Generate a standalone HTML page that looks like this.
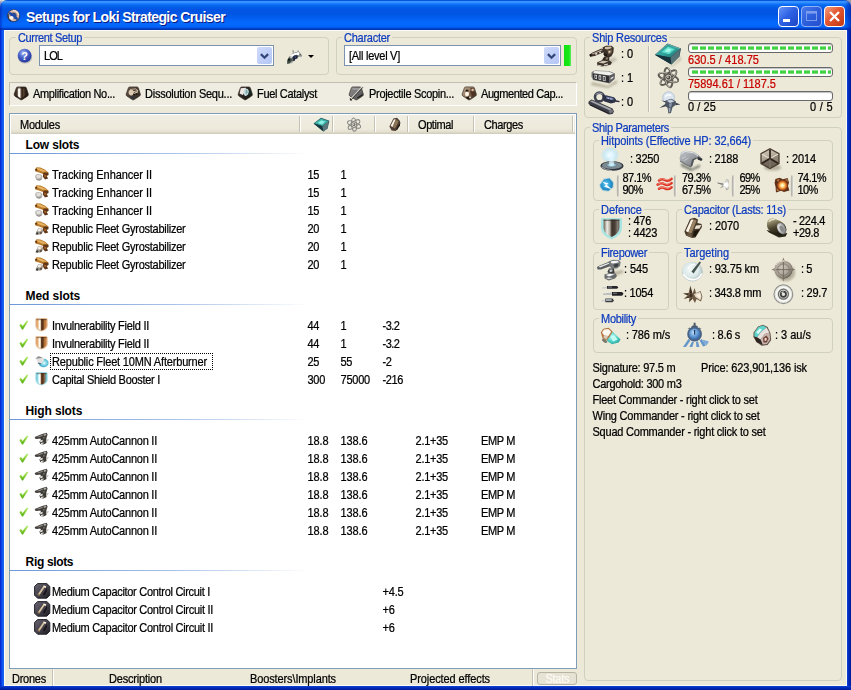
<!DOCTYPE html>
<html><head><meta charset="utf-8"><title>Setups for Loki Strategic Cruiser</title>
<style>

html,body{margin:0;padding:0}
html{background:#8E7866}
body{width:851px;height:690px;position:relative;overflow:hidden;background:#ECE9D8;font:11px/13px "Liberation Sans",sans-serif;color:#000}
.t{position:absolute;white-space:nowrap}
.tt{text-shadow:1px 1px 0 #0A1883}
.s{transform-origin:0 10px;transform:scaleY(1.1);-webkit-text-stroke:.22px}
.a{position:absolute}
.gb{position:absolute;border:1px solid #D0D0BF;border-radius:4px;box-sizing:border-box}
.cb{position:absolute;box-sizing:border-box;border:1px solid #7B93AE;background:#fff}
.ar{position:absolute;width:15px;height:17px;border-radius:2px;background:linear-gradient(135deg,#CFDBFB 0%,#C1D0F8 50%,#B4C6F6 100%)}
.pb{position:absolute;box-sizing:border-box;height:10px;border:1px solid #686868;border-radius:3px;background:#fff;box-shadow:inset 0 1px 1px #BEBEBE}
.pf{position:absolute;left:3px;top:1.5px;height:4.5px;background:repeating-linear-gradient(90deg,#3CD23C 0,#3CD23C 6px,#fff 6px,#fff 8px)}
.pf:after{content:"";position:absolute;left:0;right:0;top:0;height:100%;background:linear-gradient(180deg,rgba(255,255,255,.55),rgba(255,255,255,0) 40%,rgba(255,255,255,0) 60%,rgba(255,255,255,.45))}
.hs{position:absolute;top:116px;width:1px;height:16px;background:#C5C2B2;box-shadow:1px 0 0 #fff}
.gl{position:absolute;height:1px;left:10px;width:300px;background:linear-gradient(90deg,#6C96D8 0,#A9C2E8 55%,#fff 100%)}
.vb{position:absolute;width:4px;height:22px;border-radius:50%;background:linear-gradient(90deg,rgba(236,233,216,0),#CFCDC4 30%,#8C8C88 50%,#FBFAF4 72%,rgba(236,233,216,0))}
svg{position:absolute;overflow:visible}

</style></head><body>
<div class="a" style="left:843px;top:0px;width:8px;height:8px;background:#989CB0"></div>
<div class="a" style="left:0;top:0;width:851px;height:30px;background:linear-gradient(180deg,#0050D4 0,#0A5CE0 1px,#3A92FF 1.5px,#3590FF 2.5px,#1C7EFC 3.5px,#0A6AF2 5px,#045EE8 7px,#0256E3 9px,#0255E3 14px,#025CEC 17px,#0364F6 20px,#0468FD 23px,#0467FC 26px,#035AEC 27.5px,#0142CA 28.5px,#0038B4 29.5px,#0038B4 30px);border-radius:7px 7px 0 0"></div>
<div class="a" style="left:845px;top:0px;width:6px;height:30px;background:linear-gradient(90deg,rgba(0,20,150,0),rgba(0,20,150,.6));border-radius:0 7px 0 0"></div>
<div class="a" style="left:0px;top:0px;width:3px;height:30px;background:linear-gradient(90deg,rgba(0,20,170,.5),rgba(0,20,170,0));border-radius:7px 0 0 0"></div>
<div class="a" style="left:0px;top:30px;width:4px;height:660px;background:linear-gradient(90deg,#0020CC 0,#0834DC 1px,#0C50EC 2px,#1460F0 3px,#1460F0 4px)"></div>
<div class="a" style="left:847px;top:30px;width:4px;height:660px;background:linear-gradient(90deg,#1444D4 0,#0834C4 1px,#0028B4 2px,#001CA0 4px)"></div>
<div class="a" style="left:0px;top:686px;width:851px;height:4px;background:linear-gradient(180deg,#1444D4 0,#0834C4 1px,#0028B4 2px,#001CA0 4px)"></div>
<svg style="left:6.6px;top:8.6px" width="14" height="14" viewBox="0 0 14 14"><defs><radialGradient id="g1" cx="0.5" cy="0.5" r="0.5"><stop offset="0" stop-color="#2A56B8"/><stop offset="0.38" stop-color="#2A4890"/><stop offset="0.55" stop-color="#B89888"/><stop offset="0.8" stop-color="#E8CCBC"/><stop offset="1" stop-color="#5A5058"/></radialGradient><filter id="f2" x="-30%" y="-30%" width="160%" height="160%"><feGaussianBlur stdDeviation="0.5"/></filter></defs>
<circle cx="6.6" cy="6.8" r="6.5" fill="#20264A" opacity=".55"/>
<circle cx="6.6" cy="6.6" r="6" fill="url(#g1)"/>
<path d="M1.2 5.2 Q1 9.5 4 11.6" stroke="#2A2A30" stroke-width="1.5" fill="none" opacity=".8"/>
<path d="M3.2 4.4 L9.6 9.6" stroke="#1E48A8" stroke-width="2.6" stroke-linecap="round"/>
<ellipse cx="4.4" cy="8.8" rx="2.2" ry="1.9" fill="#FFF4EC" filter="url(#f2)"/>
<path d="M6 1.6 Q10.6 1.6 11.6 6" stroke="#F4E0D4" stroke-width="1.5" fill="none" opacity=".9"/></svg>
<span class="t tt" style="left:26.00px;top:9px;letter-spacing:-0.594px;color:#fff;font-size:14px;line-height:16px;font-weight:bold">Setups for Loki Strategic Cruiser</span>
<div class="a" style="left:4px;top:30px;width:843px;height:1px;background:#fff;opacity:.8"></div>
<div class="a" style="left:4px;top:30px;width:1px;height:656px;background:#fff;opacity:.8"></div>
<div class="a" style="left:846px;top:30px;width:1px;height:656px;background:#fff;opacity:.8"></div>
<div class="a" style="left:4px;top:685px;width:843px;height:1px;background:#fff;opacity:.8"></div>
<svg style="left:778px;top:6px" width="21" height="21" viewBox="0 0 21 21"><defs><linearGradient id="g3" x1="0" y1="0" x2="1" y2="1"><stop offset="0" stop-color="#6A98FA"/><stop offset="0.45" stop-color="#2E62E4"/><stop offset="1" stop-color="#1C44C4"/></linearGradient></defs>
<rect x=".5" y=".5" width="20" height="20" rx="3.5" fill="url(#g3)" stroke="#fff" stroke-opacity="1" stroke-width="1"/><rect x="5" y="13" width="7" height="3" fill="#fff"/></svg>
<svg style="left:801px;top:6px" width="21" height="21" viewBox="0 0 21 21"><defs><linearGradient id="g4" x1="0" y1="0" x2="1" y2="1"><stop offset="0" stop-color="#4C7CEC"/><stop offset="0.5" stop-color="#2C5EDC"/><stop offset="1" stop-color="#244ECC"/></linearGradient></defs>
<rect x=".5" y=".5" width="20" height="20" rx="3.5" fill="url(#g4)" stroke="#fff" stroke-opacity="0.5" stroke-width="1"/><rect x="5.5" y="6.5" width="10" height="8" fill="none" stroke="#7C9CEE" stroke-width="1"/><rect x="5" y="5" width="11" height="2.6" fill="#7C9CEE"/></svg>
<svg style="left:824px;top:6px" width="21" height="21" viewBox="0 0 21 21"><defs><linearGradient id="g5" x1="0" y1="0" x2="1" y2="1"><stop offset="0" stop-color="#F2A484"/><stop offset="0.45" stop-color="#E4552F"/><stop offset="1" stop-color="#BE3712"/></linearGradient></defs>
<rect x=".5" y=".5" width="20" height="20" rx="3.5" fill="url(#g5)" stroke="#fff" stroke-opacity="1" stroke-width="1"/><path d="M6 6 L15 15 M15 6 L6 15" stroke="#fff" stroke-width="2.3"/></svg>
<div class="gb" style="left:9px;top:37px;width:320px;height:38px"></div>
<div class="a" style="left:16px;top:37px;width:68px;height:1px;background:#ECE9D8"></div>
<span class="t s" style="left:18.00px;top:32px;letter-spacing:-0.345px;color:#0E3CBE">Current Setup</span>
<svg style="left:17px;top:47.6px" width="16" height="16" viewBox="0 0 16 16"><defs><radialGradient id="g6" cx="0.4" cy="0.3" r="0.75"><stop offset="0" stop-color="#A8B8F0"/><stop offset="0.45" stop-color="#4A64CC"/><stop offset="1" stop-color="#1E2E94"/></radialGradient></defs>
<ellipse cx="8" cy="9" rx="7.2" ry="6.6" fill="#7880A0" opacity=".45"/><circle cx="7.6" cy="7.7" r="6.9" fill="url(#g6)"/>
<text x="7.7" y="11.8" font-family="Liberation Sans,sans-serif" font-weight="bold" font-size="11" fill="#fff" text-anchor="middle">?</text></svg>
<div class="cb" style="left:39px;top:45px;width:235px;height:21px"></div>
<div class="ar" style="left:257px;top:47px"></div>
<svg style="left:260px;top:52.6px" width="9" height="7" viewBox="0 0 9 7"><path d="M.9 1.1 L4.5 4.7 L8.1 1.1" stroke="#34487A" stroke-width="2.3" fill="none"/></svg>
<span class="t s" style="left:44.00px;top:50px;letter-spacing:-0.900px">LOL</span>
<svg style="left:286px;top:48px" width="17" height="17" viewBox="0 0 17 17"><defs><filter id="f7" x="-30%" y="-30%" width="160%" height="160%"><feGaussianBlur stdDeviation="0.4"/></filter></defs><g filter="url(#f7)">
<path d="M1 16 L1.6 11.4 L3.4 8.4 L5.4 7.4 L6.4 5.6 L9 4.6 L12.4 3.6 L14 5 L16 7.4 L15.6 8.8 L12.6 8.4 L11.4 10.4 L9.4 11 L8.6 13 L6 13.4 L4 15.4 Z" fill="#5E6662"/>
<path d="M6.4 2.6 L7.6 2 L8 4.6 L6.8 5Z M11.6 2.4 L12.8 2.6 L12.6 4.4 L11.6 4.2Z" fill="#8A9092"/>
<path d="M4.6 7.8 L6.6 5.8 L9 5 L12.6 4 L13.6 5.4 L13 7.4 L10.4 6.8 L8 7.6 L6 9.4Z" fill="#FFFFFF"/>
<path d="M6.4 9.2 L8 7.8 L10.4 7.2 L11.6 8.6 L11 10.4 L9.2 11 L8.4 12.8 L7 12.4 L7.2 10.6Z" fill="#1E2440"/>
<path d="M8.6 8.6 L10.2 8.2 L10.2 9.6 L8.8 10Z" fill="#4A5478"/>
<path d="M1.4 12.4 L3 9.6 L5 10.8 L5.6 12.6 L4 14.6 L1.6 15.6 Z" fill="#3A4640"/>
<circle cx="2.9" cy="11.8" r="1.1" fill="#141A16"/>
<path d="M3.6 9 L5.2 7.8 L6.2 9.2 L5 10.4Z" fill="#D4DAD8"/>
<path d="M13 7.6 L16 7.6 L15.6 8.8 L13 8.6Z" fill="#B8BEC0"/>
<path d="M4.6 14.4 L6.4 13 L7.4 13.6 L5.4 15.4Z" fill="#9AA29E"/></g></svg>
<div class="a" style="left:308px;top:55px;width:0;height:0;border-left:3px solid transparent;border-right:3px solid transparent;border-top:3px solid #000"></div>
<div class="gb" style="left:336px;top:37px;width:241px;height:38px"></div>
<div class="a" style="left:342px;top:37px;width:50px;height:1px;background:#ECE9D8"></div>
<span class="t s" style="left:344.00px;top:32px;letter-spacing:-0.255px;color:#0E3CBE">Character</span>
<div class="cb" style="left:344px;top:45px;width:217px;height:21px"></div>
<div class="ar" style="left:544px;top:47px"></div>
<svg style="left:547px;top:52.6px" width="9" height="7" viewBox="0 0 9 7"><path d="M.9 1.1 L4.5 4.7 L8.1 1.1" stroke="#34487A" stroke-width="2.3" fill="none"/></svg>
<span class="t s" style="left:349.00px;top:50px;letter-spacing:-0.263px">[All level V]</span>
<div class="a" style="left:564px;top:45px;width:7px;height:21px;background:linear-gradient(90deg,#10E210,#16E616 70%,#5CEE5C)"></div>
<div class="a" style="left:9px;top:82px;width:568px;height:24px;border:1px solid #C2BFAE;border-bottom-color:#fff;border-right-color:#fff;box-sizing:border-box;background:#EFEDE1"></div>
<svg style="left:14px;top:86px" width="15" height="15" viewBox="0 0 15 15"><defs><linearGradient id="g8" x1="0" y1="0" x2="1" y2="0"><stop offset="0" stop-color="#2E221A"/><stop offset="0.22" stop-color="#4A3A2E"/><stop offset="0.3" stop-color="#F4EEE4"/><stop offset="0.4" stop-color="#FFFFFF"/><stop offset="0.47" stop-color="#8A7460"/><stop offset="0.55" stop-color="#2A1E16"/><stop offset="0.68" stop-color="#5A4434"/><stop offset="0.78" stop-color="#2E2018"/><stop offset="1" stop-color="#241A12"/></linearGradient><filter id="f9" x="-30%" y="-30%" width="160%" height="160%"><feGaussianBlur stdDeviation="0.35"/></filter></defs><g filter="url(#f9)"><path d="M3.8 .9 L10.9 .9 Q12 .9 12.4 2 L14.3 8 Q14.6 9.2 13.7 10 L8.2 13.6 Q7.2 14.2 6.2 13.6 L.8 10 Q-.1 9.2 .2 8 L2.3 2 Q2.7 .9 3.8 .9Z" fill="url(#g8)" stroke="#2A201A" stroke-width=".6"/><path d="M3.8 .9 L10.9 .9 L12 2.4 L2.6 2.4Z" fill="#2A1E16" opacity=".7"/><path d="M1 10 L6.2 13.6 L8.2 13.6 L13.6 10 L12 9.6 L7.2 12.6 L2.6 9.6Z" fill="#1A120C" opacity=".8"/></g></svg>
<span class="t s" style="left:33.00px;top:88px;letter-spacing:-0.350px">Amplification No...</span>
<svg style="left:126px;top:86px" width="15" height="15" viewBox="0 0 15 15"><defs><linearGradient id="g10" x1="0" y1="0" x2="1" y2="1"><stop offset="0" stop-color="#6A5A4C"/><stop offset="0.5" stop-color="#4A3C30"/><stop offset="1" stop-color="#2A2620"/></linearGradient><filter id="f11" x="-30%" y="-30%" width="160%" height="160%"><feGaussianBlur stdDeviation="0.35"/></filter></defs><g filter="url(#f11)"><path d="M3.8 .9 L10.9 .9 Q12 .9 12.4 2 L14.3 8 Q14.6 9.2 13.7 10 L8.2 13.6 Q7.2 14.2 6.2 13.6 L.8 10 Q-.1 9.2 .2 8 L2.3 2 Q2.7 .9 3.8 .9Z" fill="url(#g10)" stroke="#2A201A" stroke-width=".6"/><ellipse cx="5.2" cy="6.6" rx="2.6" ry="2.8" fill="#DCCCB4"/><path d="M4 3.6 L10 2.8 L12 5 L7 8.6" stroke="#B8A890" stroke-width="1" fill="none"/><path d="M7 6 L11.6 4.4 M7.6 7.6 L12 6" stroke="#E8DCC8" stroke-width=".8"/><circle cx="8" cy="8.4" r=".9" fill="#120C08"/><circle cx="10.2" cy="8" r=".8" fill="#120C08"/><path d="M3.4 10.6 L7.2 13.2 L10 11.2 L6.6 10Z" fill="#30343E"/></g></svg>
<span class="t s" style="left:145.00px;top:88px;letter-spacing:-0.248px">Dissolution Sequ...</span>
<svg style="left:238px;top:86px" width="15" height="15" viewBox="0 0 15 15"><defs><linearGradient id="g12" x1="0" y1="0" x2="1" y2="1"><stop offset="0" stop-color="#4A3E38"/><stop offset="0.5" stop-color="#2A2420"/><stop offset="1" stop-color="#161412"/></linearGradient><filter id="f13" x="-30%" y="-30%" width="160%" height="160%"><feGaussianBlur stdDeviation="0.35"/></filter></defs><g filter="url(#f13)"><path d="M3.8 .9 L10.9 .9 Q12 .9 12.4 2 L14.3 8 Q14.6 9.2 13.7 10 L8.2 13.6 Q7.2 14.2 6.2 13.6 L.8 10 Q-.1 9.2 .2 8 L2.3 2 Q2.7 .9 3.8 .9Z" fill="url(#g12)" stroke="#2A201A" stroke-width=".6"/><path d="M2.8 2.2 L8 1.8 L7 6 L4.6 9 L1.6 7.4Z" fill="#F0E8E4"/><path d="M6.6 2.6 Q10.4 2 10.8 5.6 Q10.6 9.4 7.6 10 Q5.2 9.4 5.6 5.6Z" fill="#C4DCDC"/><path d="M8 3.6 Q9.8 4 9.6 6.4 L8 8.4 Q7 6 8 3.6Z" fill="#7CA4A6"/><path d="M10.8 3 L12.6 5 L13.2 8.6 L10.6 9.6 Q11.6 6 10.8 3Z" fill="#14302E"/></g></svg>
<span class="t s" style="left:257.00px;top:88px;letter-spacing:-0.323px">Fuel Catalyst</span>
<svg style="left:349px;top:86px" width="15" height="15" viewBox="0 0 15 15"><defs><linearGradient id="g14" x1="0" y1="0" x2="1" y2="1"><stop offset="0" stop-color="#8E8E8C"/><stop offset="0.5" stop-color="#727274"/><stop offset="1" stop-color="#3A3A38"/></linearGradient><filter id="f15" x="-30%" y="-30%" width="160%" height="160%"><feGaussianBlur stdDeviation="0.35"/></filter></defs><g filter="url(#f15)"><path d="M3.8 .9 L10.9 .9 Q12 .9 12.4 2 L14.3 8 Q14.6 9.2 13.7 10 L8.2 13.6 Q7.2 14.2 6.2 13.6 L.8 10 Q-.1 9.2 .2 8 L2.3 2 Q2.7 .9 3.8 .9Z" fill="url(#g14)" stroke="#2A201A" stroke-width=".6"/><path d="M3.4 2.6 L10.6 2.4 L11 3.4 L4 3.6Z" fill="#B4B4B2"/><path d="M1.2 13.4 L13.4 .4" stroke="#D8D4CC" stroke-width="1.1"/><path d="M2 14 L14 1.2" stroke="#2E2A26" stroke-width=".9"/><path d="M.8 11.6 L3.4 14.4 L1 14.6Z" fill="#2A2622"/><path d="M8.6 12.6 L13.4 9.4 L13.8 8 L8.2 11.6Z" fill="#1E1C1A"/></g></svg>
<span class="t s" style="left:369.00px;top:88px;letter-spacing:-0.305px">Projectile Scopin...</span>
<svg style="left:462px;top:86px" width="15" height="15" viewBox="0 0 15 15"><defs><linearGradient id="g16" x1="0" y1="0" x2="1" y2="0.8"><stop offset="0" stop-color="#B8A48C"/><stop offset="0.45" stop-color="#9A8068"/><stop offset="1" stop-color="#3A2418"/></linearGradient><filter id="f17" x="-30%" y="-30%" width="160%" height="160%"><feGaussianBlur stdDeviation="0.35"/></filter></defs><g filter="url(#f17)"><path d="M3.8 .9 L10.9 .9 Q12 .9 12.4 2 L14.3 8 Q14.6 9.2 13.7 10 L8.2 13.6 Q7.2 14.2 6.2 13.6 L.8 10 Q-.1 9.2 .2 8 L2.3 2 Q2.7 .9 3.8 .9Z" fill="url(#g16)" stroke="#2A201A" stroke-width=".6"/><circle cx="5" cy="5" r="1.5" fill="#1E1408"/><ellipse cx="5" cy="8" rx="2" ry="2.4" fill="#FFF4E4"/><path d="M8.6 2 L11.6 2.4 L13.4 8 L10.6 10.4 L8.4 7Z" fill="#4A2C1E" opacity=".85"/><circle cx="10.6" cy="4" r="1.3" fill="#D8C0A0"/><path d="M3.6 11.6 L6.4 13.4 L9 12 L7 10.6Z" fill="#1A140E"/><circle cx="8" cy="11.4" r=".9" fill="#F4ECE0"/></g></svg>
<span class="t s" style="left:481.00px;top:88px;letter-spacing:-0.417px">Augmented Cap...</span>
<div class="a" style="left:9px;top:113px;width:568px;height:556px;box-sizing:border-box;border:1px solid #7F9DB9;background:#fff"></div>
<div class="a" style="left:11px;top:115px;width:564px;height:19px;background:linear-gradient(180deg,#F0EEE2 0,#EDEADB 14px,#E2DFCF 17px,#D6D2C2 18px,#CBC7B8 20px)"></div>
<div class="hs" style="left:299px"></div>
<div class="hs" style="left:332px"></div>
<div class="hs" style="left:374px"></div>
<div class="hs" style="left:407px"></div>
<div class="hs" style="left:473px"></div>
<div class="hs" style="left:572px"></div>
<span class="t s" style="left:20.00px;top:119px;letter-spacing:-0.225px">Modules</span>
<span class="t s" style="left:418.00px;top:119px;letter-spacing:-0.415px">Optimal</span>
<span class="t s" style="left:484.00px;top:119px;letter-spacing:-0.368px">Charges</span>
<svg style="left:313px;top:117px" width="17" height="15" viewBox="0 0 17 15"><defs><filter id="f18" x="-30%" y="-30%" width="160%" height="160%"><feGaussianBlur stdDeviation="0.3"/></filter></defs><g filter="url(#f18)"><path d="M.6 6.4 L8 .8 L16.4 3.8 L14.6 11.4 L10.4 14.4 Z" fill="#245258"/><path d="M1.4 6.2 L8 1.4 L15.6 4.2 L9.4 9Z" fill="#3CB4AC"/><path d="M4.8 5.8 L8.4 3.2 L12.2 4.8 L8.8 7.4Z" fill="#8CF0E0"/><path d="M.6 6.4 L9.4 9 L10.4 14.4 Z" fill="#17383E"/><path d="M9.4 9 L15.6 4.2 L14.6 11.4 L10.4 14.4Z" fill="#5A787C"/></g></svg>
<svg style="left:346px;top:117px" width="16" height="15" viewBox="0 0 16 15"><g fill="none" stroke="#8C8A86" stroke-width="1.1"><ellipse cx="8" cy="7.6" rx="7" ry="2.6" transform="rotate(22 8 7.6)"/><ellipse cx="8" cy="7.6" rx="7" ry="2.6" transform="rotate(-38 8 7.6)"/><ellipse cx="8" cy="7.6" rx="6.6" ry="2.5" transform="rotate(84 8 7.6)"/></g><circle cx="8" cy="7.6" r="1.5" fill="#6A6864"/><circle cx="7.6" cy="7.2" r=".7" fill="#D8D6D0"/></svg>
<svg style="left:388px;top:117px" width="13" height="15" viewBox="0 0 13 15"><defs><filter id="f19" x="-30%" y="-30%" width="160%" height="160%"><feGaussianBlur stdDeviation="0.3"/></filter></defs><g filter="url(#f19)"><path d="M1.4 9.4 L5.4 1.6 L9 .8 L12 4 L12.4 6.6 L7.6 14 L3.6 13.4 Z" fill="#4E3E30"/><path d="M2.6 9 L5.8 2.4 L7.8 2.2 L4.6 10Z" fill="#FAF2E4"/><path d="M7.8 2.2 L10.6 4.6 L7 11.6 L4.8 10.2Z" fill="#8A7458"/><path d="M8 12.6 L11.8 6 L12 8.4 L8.8 13.6Z" fill="#1E1610"/></g></svg>
<span class="t" style="left:25.60px;top:138px;letter-spacing:-0.194px;font-size:12px;line-height:14px;font-weight:bold">Low slots</span>
<div class="gl" style="top:153px"></div>
<svg style="left:34px;top:166px" width="16" height="16" viewBox="0 0 16 16"><defs><filter id="f21" x="-30%" y="-30%" width="160%" height="160%"><feGaussianBlur stdDeviation="0.35"/></filter></defs><g filter="url(#f21)"><path d="M.8 3.4 L2.6 1.2 L6.4 1.6 L10.8 3.6 L14.4 6.6 L14 8.6 L9.6 8.2 L5 6.6 L1.4 5.6Z" fill="#B87A2C"/>
<path d="M2.4 2 L6.4 2.4 L10.4 4.2 L12.6 6 L8 5.4 L3.6 3.8Z" fill="#E8B464"/>
<path d="M1.2 3.6 L2.6 2.4 L3.4 4 L2 5Z" fill="#5A3210"/>
<path d="M9.8 6.4 L14.4 6.8 L14.6 9 L12.6 10 L14.2 12.4 L11 13.4 L8.8 10.6 L9.2 8Z" fill="#5E3414"/>
<path d="M10.4 8.6 L12.4 9.2 L11.8 11 L10 10.4Z" fill="#A8642C"/><path d="M1.2 10.6 Q1.2 8.2 4 8 L7 8.4 Q8.6 9.2 8.4 11.6 Q8 14.6 5 14.8 Q1.6 14.6 1.2 10.6Z" fill="#B8B4B0"/>
<path d="M2.2 10.2 Q2.6 8.8 4.4 8.8 L6.4 9.2 Q7.2 10 6.6 11.6 Q5 12.6 3.2 12Z" fill="#E4E0DC"/>
<path d="M2.6 13.4 Q5 15 7.6 13" stroke="#8A8A88" stroke-width=".9" fill="none"/></g></svg>
<span class="t s" style="left:52.00px;top:169px;letter-spacing:-0.055px">Tracking Enhancer II</span>
<span class="t s" style="left:307.50px;top:169px;letter-spacing:-0.375px">15</span>
<span class="t s" style="left:340.50px;top:169px">1</span>
<svg style="left:34px;top:184px" width="16" height="16" viewBox="0 0 16 16"><defs><filter id="f23" x="-30%" y="-30%" width="160%" height="160%"><feGaussianBlur stdDeviation="0.35"/></filter></defs><g filter="url(#f23)"><path d="M.8 3.4 L2.6 1.2 L6.4 1.6 L10.8 3.6 L14.4 6.6 L14 8.6 L9.6 8.2 L5 6.6 L1.4 5.6Z" fill="#B87A2C"/>
<path d="M2.4 2 L6.4 2.4 L10.4 4.2 L12.6 6 L8 5.4 L3.6 3.8Z" fill="#E8B464"/>
<path d="M1.2 3.6 L2.6 2.4 L3.4 4 L2 5Z" fill="#5A3210"/>
<path d="M9.8 6.4 L14.4 6.8 L14.6 9 L12.6 10 L14.2 12.4 L11 13.4 L8.8 10.6 L9.2 8Z" fill="#5E3414"/>
<path d="M10.4 8.6 L12.4 9.2 L11.8 11 L10 10.4Z" fill="#A8642C"/><path d="M1.2 10.6 Q1.2 8.2 4 8 L7 8.4 Q8.6 9.2 8.4 11.6 Q8 14.6 5 14.8 Q1.6 14.6 1.2 10.6Z" fill="#B8B4B0"/>
<path d="M2.2 10.2 Q2.6 8.8 4.4 8.8 L6.4 9.2 Q7.2 10 6.6 11.6 Q5 12.6 3.2 12Z" fill="#E4E0DC"/>
<path d="M2.6 13.4 Q5 15 7.6 13" stroke="#8A8A88" stroke-width=".9" fill="none"/></g></svg>
<span class="t s" style="left:52.00px;top:187px;letter-spacing:-0.055px">Tracking Enhancer II</span>
<span class="t s" style="left:307.50px;top:187px;letter-spacing:-0.375px">15</span>
<span class="t s" style="left:340.50px;top:187px">1</span>
<svg style="left:34px;top:202px" width="16" height="16" viewBox="0 0 16 16"><defs><filter id="f25" x="-30%" y="-30%" width="160%" height="160%"><feGaussianBlur stdDeviation="0.35"/></filter></defs><g filter="url(#f25)"><path d="M.8 3.4 L2.6 1.2 L6.4 1.6 L10.8 3.6 L14.4 6.6 L14 8.6 L9.6 8.2 L5 6.6 L1.4 5.6Z" fill="#B87A2C"/>
<path d="M2.4 2 L6.4 2.4 L10.4 4.2 L12.6 6 L8 5.4 L3.6 3.8Z" fill="#E8B464"/>
<path d="M1.2 3.6 L2.6 2.4 L3.4 4 L2 5Z" fill="#5A3210"/>
<path d="M9.8 6.4 L14.4 6.8 L14.6 9 L12.6 10 L14.2 12.4 L11 13.4 L8.8 10.6 L9.2 8Z" fill="#5E3414"/>
<path d="M10.4 8.6 L12.4 9.2 L11.8 11 L10 10.4Z" fill="#A8642C"/><path d="M1.2 10.6 Q1.2 8.2 4 8 L7 8.4 Q8.6 9.2 8.4 11.6 Q8 14.6 5 14.8 Q1.6 14.6 1.2 10.6Z" fill="#B8B4B0"/>
<path d="M2.2 10.2 Q2.6 8.8 4.4 8.8 L6.4 9.2 Q7.2 10 6.6 11.6 Q5 12.6 3.2 12Z" fill="#E4E0DC"/>
<path d="M2.6 13.4 Q5 15 7.6 13" stroke="#8A8A88" stroke-width=".9" fill="none"/></g></svg>
<span class="t s" style="left:52.00px;top:205px;letter-spacing:-0.055px">Tracking Enhancer II</span>
<span class="t s" style="left:307.50px;top:205px;letter-spacing:-0.375px">15</span>
<span class="t s" style="left:340.50px;top:205px">1</span>
<svg style="left:34px;top:220px" width="16" height="16" viewBox="0 0 16 16"><defs><filter id="f27" x="-30%" y="-30%" width="160%" height="160%"><feGaussianBlur stdDeviation="0.35"/></filter></defs><g filter="url(#f27)"><path d="M.8 3.4 L2.6 1.2 L6.4 1.6 L10.8 3.6 L14.4 6.6 L14 8.6 L9.6 8.2 L5 6.6 L1.4 5.6Z" fill="#B87A2C"/>
<path d="M2.4 2 L6.4 2.4 L10.4 4.2 L12.6 6 L8 5.4 L3.6 3.8Z" fill="#E8B464"/>
<path d="M1.2 3.6 L2.6 2.4 L3.4 4 L2 5Z" fill="#5A3210"/>
<path d="M9.8 6.4 L14.4 6.8 L14.6 9 L12.6 10 L14.2 12.4 L11 13.4 L8.8 10.6 L9.2 8Z" fill="#5E3414"/>
<path d="M10.4 8.6 L12.4 9.2 L11.8 11 L10 10.4Z" fill="#A8642C"/><path d="M4.4 8 L8.4 8.4 L9.4 11 L8 13.6 L5.4 14.8 L1.6 14.2 L2.4 11.4Z" fill="#A8A49C"/>
<path d="M4.6 8.4 L7.6 8.8 L7.4 11 L5 11.6 L3.6 10.4Z" fill="#F4F0EC"/>
<path d="M1.6 14.2 L3 12 L4.6 13 L3.8 14.8Z" fill="#3A3E36"/>
<path d="M5.6 12 L8 11.4 L8 13.4 L6 14.4Z" fill="#6A5A48"/>
<path d="M6.4 9.4 L8 10 L7.6 11.4Z" fill="#C8906C"/></g></svg>
<span class="t s" style="left:52.00px;top:223px;letter-spacing:-0.246px">Republic Fleet Gyrostabilizer</span>
<span class="t s" style="left:307.50px;top:223px;letter-spacing:-0.375px">20</span>
<span class="t s" style="left:340.50px;top:223px">1</span>
<svg style="left:34px;top:238px" width="16" height="16" viewBox="0 0 16 16"><defs><filter id="f29" x="-30%" y="-30%" width="160%" height="160%"><feGaussianBlur stdDeviation="0.35"/></filter></defs><g filter="url(#f29)"><path d="M.8 3.4 L2.6 1.2 L6.4 1.6 L10.8 3.6 L14.4 6.6 L14 8.6 L9.6 8.2 L5 6.6 L1.4 5.6Z" fill="#B87A2C"/>
<path d="M2.4 2 L6.4 2.4 L10.4 4.2 L12.6 6 L8 5.4 L3.6 3.8Z" fill="#E8B464"/>
<path d="M1.2 3.6 L2.6 2.4 L3.4 4 L2 5Z" fill="#5A3210"/>
<path d="M9.8 6.4 L14.4 6.8 L14.6 9 L12.6 10 L14.2 12.4 L11 13.4 L8.8 10.6 L9.2 8Z" fill="#5E3414"/>
<path d="M10.4 8.6 L12.4 9.2 L11.8 11 L10 10.4Z" fill="#A8642C"/><path d="M4.4 8 L8.4 8.4 L9.4 11 L8 13.6 L5.4 14.8 L1.6 14.2 L2.4 11.4Z" fill="#A8A49C"/>
<path d="M4.6 8.4 L7.6 8.8 L7.4 11 L5 11.6 L3.6 10.4Z" fill="#F4F0EC"/>
<path d="M1.6 14.2 L3 12 L4.6 13 L3.8 14.8Z" fill="#3A3E36"/>
<path d="M5.6 12 L8 11.4 L8 13.4 L6 14.4Z" fill="#6A5A48"/>
<path d="M6.4 9.4 L8 10 L7.6 11.4Z" fill="#C8906C"/></g></svg>
<span class="t s" style="left:52.00px;top:241px;letter-spacing:-0.246px">Republic Fleet Gyrostabilizer</span>
<span class="t s" style="left:307.50px;top:241px;letter-spacing:-0.375px">20</span>
<span class="t s" style="left:340.50px;top:241px">1</span>
<svg style="left:34px;top:256px" width="16" height="16" viewBox="0 0 16 16"><defs><filter id="f31" x="-30%" y="-30%" width="160%" height="160%"><feGaussianBlur stdDeviation="0.35"/></filter></defs><g filter="url(#f31)"><path d="M.8 3.4 L2.6 1.2 L6.4 1.6 L10.8 3.6 L14.4 6.6 L14 8.6 L9.6 8.2 L5 6.6 L1.4 5.6Z" fill="#B87A2C"/>
<path d="M2.4 2 L6.4 2.4 L10.4 4.2 L12.6 6 L8 5.4 L3.6 3.8Z" fill="#E8B464"/>
<path d="M1.2 3.6 L2.6 2.4 L3.4 4 L2 5Z" fill="#5A3210"/>
<path d="M9.8 6.4 L14.4 6.8 L14.6 9 L12.6 10 L14.2 12.4 L11 13.4 L8.8 10.6 L9.2 8Z" fill="#5E3414"/>
<path d="M10.4 8.6 L12.4 9.2 L11.8 11 L10 10.4Z" fill="#A8642C"/><path d="M4.4 8 L8.4 8.4 L9.4 11 L8 13.6 L5.4 14.8 L1.6 14.2 L2.4 11.4Z" fill="#A8A49C"/>
<path d="M4.6 8.4 L7.6 8.8 L7.4 11 L5 11.6 L3.6 10.4Z" fill="#F4F0EC"/>
<path d="M1.6 14.2 L3 12 L4.6 13 L3.8 14.8Z" fill="#3A3E36"/>
<path d="M5.6 12 L8 11.4 L8 13.4 L6 14.4Z" fill="#6A5A48"/>
<path d="M6.4 9.4 L8 10 L7.6 11.4Z" fill="#C8906C"/></g></svg>
<span class="t s" style="left:52.00px;top:259px;letter-spacing:-0.246px">Republic Fleet Gyrostabilizer</span>
<span class="t s" style="left:307.50px;top:259px;letter-spacing:-0.375px">20</span>
<span class="t s" style="left:340.50px;top:259px">1</span>
<span class="t" style="left:25.60px;top:289px;letter-spacing:-0.083px;font-size:12px;line-height:14px;font-weight:bold">Med slots</span>
<div class="gl" style="top:304px"></div>
<svg style="left:18.6px;top:320.4px" width="10" height="10" viewBox="0 0 10 10"><defs><linearGradient id="g32" x1="0" y1="0" x2="0" y2="1"><stop offset="0" stop-color="#C4EE84"/><stop offset="0.45" stop-color="#8ED63E"/><stop offset="1" stop-color="#58AC18"/></linearGradient><filter id="f33" x="-30%" y="-30%" width="160%" height="160%"><feGaussianBlur stdDeviation="0.35"/></filter></defs><path d="M.4 5.2 L2 3.8 L3.6 6 L7.8 .4 L9.4 1.2 L4 9.4 L3 9.4 Z" fill="url(#g32)" filter="url(#f33)"/></svg>
<svg style="left:34px;top:317px" width="16" height="16" viewBox="0 0 16 16"><defs><linearGradient id="g34" x1="0" y1="0" x2="1" y2="0"><stop offset="0" stop-color="#D08844"/><stop offset="0.16" stop-color="#F4C490"/><stop offset="0.3" stop-color="#FFFFFF"/><stop offset="0.42" stop-color="#D8C0A0"/><stop offset="0.5" stop-color="#4A2C18"/><stop offset="0.66" stop-color="#6A3C1C"/><stop offset="0.8" stop-color="#B8763C"/><stop offset="1" stop-color="#D08844"/></linearGradient><filter id="f35" x="-30%" y="-30%" width="160%" height="160%"><feGaussianBlur stdDeviation="0.35"/></filter></defs><g filter="url(#f35)"><path d="M1.4 2.4 Q1.4 1 3 1 L11.4 1 Q13.4 1 13.6 2.4 L13.8 8.4 Q13.6 12.6 8.4 14.2 Q7.4 14.4 6.4 14.2 Q1.4 12.4 1.4 8.4Z" fill="#D08844" opacity=".55"/>
<path d="M2.6 2 L12.6 2 L12.6 8.4 Q12.4 12 7.6 13.6 Q2.8 12 2.6 8.4Z" fill="url(#g34)"/>
<path d="M2.6 2 L12.6 2 L12.6 3.2 L2.6 3.2Z" fill="#3A2416" opacity=".45"/></g></svg>
<span class="t s" style="left:52.00px;top:320px;letter-spacing:-0.264px">Invulnerability Field II</span>
<span class="t s" style="left:307.50px;top:320px;letter-spacing:-0.375px">44</span>
<span class="t s" style="left:340.50px;top:320px">1</span>
<span class="t s" style="left:382.50px;top:320px;letter-spacing:-0.492px">-3.2</span>
<svg style="left:18.6px;top:338.4px" width="10" height="10" viewBox="0 0 10 10"><defs><linearGradient id="g36" x1="0" y1="0" x2="0" y2="1"><stop offset="0" stop-color="#C4EE84"/><stop offset="0.45" stop-color="#8ED63E"/><stop offset="1" stop-color="#58AC18"/></linearGradient><filter id="f37" x="-30%" y="-30%" width="160%" height="160%"><feGaussianBlur stdDeviation="0.35"/></filter></defs><path d="M.4 5.2 L2 3.8 L3.6 6 L7.8 .4 L9.4 1.2 L4 9.4 L3 9.4 Z" fill="url(#g36)" filter="url(#f37)"/></svg>
<svg style="left:34px;top:335px" width="16" height="16" viewBox="0 0 16 16"><defs><linearGradient id="g38" x1="0" y1="0" x2="1" y2="0"><stop offset="0" stop-color="#D08844"/><stop offset="0.16" stop-color="#F4C490"/><stop offset="0.3" stop-color="#FFFFFF"/><stop offset="0.42" stop-color="#D8C0A0"/><stop offset="0.5" stop-color="#4A2C18"/><stop offset="0.66" stop-color="#6A3C1C"/><stop offset="0.8" stop-color="#B8763C"/><stop offset="1" stop-color="#D08844"/></linearGradient><filter id="f39" x="-30%" y="-30%" width="160%" height="160%"><feGaussianBlur stdDeviation="0.35"/></filter></defs><g filter="url(#f39)"><path d="M1.4 2.4 Q1.4 1 3 1 L11.4 1 Q13.4 1 13.6 2.4 L13.8 8.4 Q13.6 12.6 8.4 14.2 Q7.4 14.4 6.4 14.2 Q1.4 12.4 1.4 8.4Z" fill="#D08844" opacity=".55"/>
<path d="M2.6 2 L12.6 2 L12.6 8.4 Q12.4 12 7.6 13.6 Q2.8 12 2.6 8.4Z" fill="url(#g38)"/>
<path d="M2.6 2 L12.6 2 L12.6 3.2 L2.6 3.2Z" fill="#3A2416" opacity=".45"/></g></svg>
<span class="t s" style="left:52.00px;top:338px;letter-spacing:-0.264px">Invulnerability Field II</span>
<span class="t s" style="left:307.50px;top:338px;letter-spacing:-0.375px">44</span>
<span class="t s" style="left:340.50px;top:338px">1</span>
<span class="t s" style="left:382.50px;top:338px;letter-spacing:-0.492px">-3.2</span>
<svg style="left:18.6px;top:356.4px" width="10" height="10" viewBox="0 0 10 10"><defs><linearGradient id="g40" x1="0" y1="0" x2="0" y2="1"><stop offset="0" stop-color="#C4EE84"/><stop offset="0.45" stop-color="#8ED63E"/><stop offset="1" stop-color="#58AC18"/></linearGradient><filter id="f41" x="-30%" y="-30%" width="160%" height="160%"><feGaussianBlur stdDeviation="0.35"/></filter></defs><path d="M.4 5.2 L2 3.8 L3.6 6 L7.8 .4 L9.4 1.2 L4 9.4 L3 9.4 Z" fill="url(#g40)" filter="url(#f41)"/></svg>
<svg style="left:34px;top:353px" width="16" height="16" viewBox="0 0 16 16"><defs><filter id="f43" x="-30%" y="-30%" width="160%" height="160%"><feGaussianBlur stdDeviation="0.35"/></filter><radialGradient id="g42" cx="0.55" cy="0.5" r="0.6"><stop offset="0" stop-color="#E8FCFF"/><stop offset="0.45" stop-color="#7CD4E4"/><stop offset="1" stop-color="#2E9CBC"/></radialGradient></defs><g filter="url(#f43)">
<ellipse cx="9.6" cy="10" rx="5" ry="4.2" fill="url(#g42)"/>
<path d="M1.4 5.4 L4.4 3.2 L8.6 4.4 L10.4 7 L7.4 10.6 L4 9.4Z" fill="#E4E2E0"/>
<path d="M1.4 5.4 L4.4 3.2 L8.6 4.4 L6.4 5.2 L3.6 5.4Z" fill="#8A8C92"/>
<path d="M4 9.4 L7.4 10.6 L6.6 11.6 L3.8 10.4Z" fill="#5A6470"/></g></svg>
<span class="t s" style="left:52.00px;top:356px;letter-spacing:-0.167px">Republic Fleet 10MN Afterburner</span>
<span class="t s" style="left:307.50px;top:356px;letter-spacing:-0.375px">25</span>
<span class="t s" style="left:340.50px;top:356px;letter-spacing:-0.375px">55</span>
<span class="t s" style="left:382.50px;top:356px;letter-spacing:-0.391px">-2</span>
<svg style="left:18.6px;top:374.4px" width="10" height="10" viewBox="0 0 10 10"><defs><linearGradient id="g44" x1="0" y1="0" x2="0" y2="1"><stop offset="0" stop-color="#C4EE84"/><stop offset="0.45" stop-color="#8ED63E"/><stop offset="1" stop-color="#58AC18"/></linearGradient><filter id="f45" x="-30%" y="-30%" width="160%" height="160%"><feGaussianBlur stdDeviation="0.35"/></filter></defs><path d="M.4 5.2 L2 3.8 L3.6 6 L7.8 .4 L9.4 1.2 L4 9.4 L3 9.4 Z" fill="url(#g44)" filter="url(#f45)"/></svg>
<svg style="left:34px;top:371px" width="16" height="16" viewBox="0 0 16 16"><defs><linearGradient id="g46" x1="0" y1="0" x2="1" y2="0"><stop offset="0" stop-color="#58BCCC"/><stop offset="0.16" stop-color="#B4ECF4"/><stop offset="0.3" stop-color="#FFFFFF"/><stop offset="0.42" stop-color="#D8C0A0"/><stop offset="0.5" stop-color="#4A2C18"/><stop offset="0.66" stop-color="#6A3C1C"/><stop offset="0.8" stop-color="#8A6E58"/><stop offset="1" stop-color="#58BCCC"/></linearGradient><filter id="f47" x="-30%" y="-30%" width="160%" height="160%"><feGaussianBlur stdDeviation="0.35"/></filter></defs><g filter="url(#f47)"><path d="M1.4 2.4 Q1.4 1 3 1 L11.4 1 Q13.4 1 13.6 2.4 L13.8 8.4 Q13.6 12.6 8.4 14.2 Q7.4 14.4 6.4 14.2 Q1.4 12.4 1.4 8.4Z" fill="#58BCCC" opacity=".55"/>
<path d="M2.6 2 L12.6 2 L12.6 8.4 Q12.4 12 7.6 13.6 Q2.8 12 2.6 8.4Z" fill="url(#g46)"/>
<path d="M2.6 2 L12.6 2 L12.6 3.2 L2.6 3.2Z" fill="#3A2416" opacity=".45"/></g></svg>
<span class="t s" style="left:52.00px;top:374px;letter-spacing:-0.290px">Capital Shield Booster I</span>
<span class="t s" style="left:307.50px;top:374px;letter-spacing:-0.286px">300</span>
<span class="t s" style="left:340.50px;top:374px;letter-spacing:-0.219px">75000</span>
<span class="t s" style="left:382.50px;top:374px;letter-spacing:-0.383px">-216</span>
<div class="a" style="left:50px;top:353px;width:163px;height:17px;box-sizing:border-box;border:1px dotted #000"></div>
<span class="t" style="left:25.60px;top:404px;letter-spacing:-0.142px;font-size:12px;line-height:14px;font-weight:bold">High slots</span>
<div class="gl" style="top:419px"></div>
<svg style="left:18.6px;top:435.4px" width="10" height="10" viewBox="0 0 10 10"><defs><linearGradient id="g48" x1="0" y1="0" x2="0" y2="1"><stop offset="0" stop-color="#C4EE84"/><stop offset="0.45" stop-color="#8ED63E"/><stop offset="1" stop-color="#58AC18"/></linearGradient><filter id="f49" x="-30%" y="-30%" width="160%" height="160%"><feGaussianBlur stdDeviation="0.35"/></filter></defs><path d="M.4 5.2 L2 3.8 L3.6 6 L7.8 .4 L9.4 1.2 L4 9.4 L3 9.4 Z" fill="url(#g48)" filter="url(#f49)"/></svg>
<svg style="left:34px;top:432px" width="16" height="16" viewBox="0 0 16 16"><defs><filter id="f51" x="-30%" y="-30%" width="160%" height="160%"><feGaussianBlur stdDeviation="0.35"/></filter></defs><g filter="url(#f51)">
<path d="M10 7.4 L15.2 7.2 L13 9.4 L10.6 9.6Z" fill="#A8A49C" opacity=".7"/>
<path d="M.8 5 L5.6 3 L9 1.8 L12.6 .8 L13.6 2.6 L12.6 5.6 L12 8.4 L12.6 11 L9.6 12.4 L6.2 12 L5.4 9.6 L7 8 L6.2 6.4 L3 7 L1 6.6Z" fill="#3E3A36"/>
<path d="M2 5.2 L6.4 3.4 L9.4 2.6 L8.4 4 L5 5.2Z" fill="#8E8A84"/>
<path d="M9.6 2 L12.2 1.4 L12.4 3.2 L10 4Z" fill="#A8A49E"/>
<path d="M6 8.8 L8.6 7.8 L8.6 9.4 L6.4 10.2Z M6.8 11 L9.6 10.4 L9.6 11.6 L7 12Z" fill="#F4F2EE"/>
<path d="M9 5.2 L11 4.6 L10.6 6.6 L9 7Z" fill="#6E6A64"/></g></svg>
<span class="t s" style="left:52.00px;top:435px;letter-spacing:-0.235px">425mm AutoCannon II</span>
<span class="t s" style="left:307.50px;top:435px;letter-spacing:-0.105px">18.8</span>
<span class="t s" style="left:340.50px;top:435px;letter-spacing:-0.106px">138.6</span>
<span class="t s" style="left:415.50px;top:435px;letter-spacing:-0.242px">2.1+35</span>
<span class="t s" style="left:481.00px;top:435px;letter-spacing:-0.372px">EMP M</span>
<svg style="left:18.6px;top:453.4px" width="10" height="10" viewBox="0 0 10 10"><defs><linearGradient id="g52" x1="0" y1="0" x2="0" y2="1"><stop offset="0" stop-color="#C4EE84"/><stop offset="0.45" stop-color="#8ED63E"/><stop offset="1" stop-color="#58AC18"/></linearGradient><filter id="f53" x="-30%" y="-30%" width="160%" height="160%"><feGaussianBlur stdDeviation="0.35"/></filter></defs><path d="M.4 5.2 L2 3.8 L3.6 6 L7.8 .4 L9.4 1.2 L4 9.4 L3 9.4 Z" fill="url(#g52)" filter="url(#f53)"/></svg>
<svg style="left:34px;top:450px" width="16" height="16" viewBox="0 0 16 16"><defs><filter id="f55" x="-30%" y="-30%" width="160%" height="160%"><feGaussianBlur stdDeviation="0.35"/></filter></defs><g filter="url(#f55)">
<path d="M10 7.4 L15.2 7.2 L13 9.4 L10.6 9.6Z" fill="#A8A49C" opacity=".7"/>
<path d="M.8 5 L5.6 3 L9 1.8 L12.6 .8 L13.6 2.6 L12.6 5.6 L12 8.4 L12.6 11 L9.6 12.4 L6.2 12 L5.4 9.6 L7 8 L6.2 6.4 L3 7 L1 6.6Z" fill="#3E3A36"/>
<path d="M2 5.2 L6.4 3.4 L9.4 2.6 L8.4 4 L5 5.2Z" fill="#8E8A84"/>
<path d="M9.6 2 L12.2 1.4 L12.4 3.2 L10 4Z" fill="#A8A49E"/>
<path d="M6 8.8 L8.6 7.8 L8.6 9.4 L6.4 10.2Z M6.8 11 L9.6 10.4 L9.6 11.6 L7 12Z" fill="#F4F2EE"/>
<path d="M9 5.2 L11 4.6 L10.6 6.6 L9 7Z" fill="#6E6A64"/></g></svg>
<span class="t s" style="left:52.00px;top:453px;letter-spacing:-0.235px">425mm AutoCannon II</span>
<span class="t s" style="left:307.50px;top:453px;letter-spacing:-0.105px">18.8</span>
<span class="t s" style="left:340.50px;top:453px;letter-spacing:-0.106px">138.6</span>
<span class="t s" style="left:415.50px;top:453px;letter-spacing:-0.242px">2.1+35</span>
<span class="t s" style="left:481.00px;top:453px;letter-spacing:-0.372px">EMP M</span>
<svg style="left:18.6px;top:471.4px" width="10" height="10" viewBox="0 0 10 10"><defs><linearGradient id="g56" x1="0" y1="0" x2="0" y2="1"><stop offset="0" stop-color="#C4EE84"/><stop offset="0.45" stop-color="#8ED63E"/><stop offset="1" stop-color="#58AC18"/></linearGradient><filter id="f57" x="-30%" y="-30%" width="160%" height="160%"><feGaussianBlur stdDeviation="0.35"/></filter></defs><path d="M.4 5.2 L2 3.8 L3.6 6 L7.8 .4 L9.4 1.2 L4 9.4 L3 9.4 Z" fill="url(#g56)" filter="url(#f57)"/></svg>
<svg style="left:34px;top:468px" width="16" height="16" viewBox="0 0 16 16"><defs><filter id="f59" x="-30%" y="-30%" width="160%" height="160%"><feGaussianBlur stdDeviation="0.35"/></filter></defs><g filter="url(#f59)">
<path d="M10 7.4 L15.2 7.2 L13 9.4 L10.6 9.6Z" fill="#A8A49C" opacity=".7"/>
<path d="M.8 5 L5.6 3 L9 1.8 L12.6 .8 L13.6 2.6 L12.6 5.6 L12 8.4 L12.6 11 L9.6 12.4 L6.2 12 L5.4 9.6 L7 8 L6.2 6.4 L3 7 L1 6.6Z" fill="#3E3A36"/>
<path d="M2 5.2 L6.4 3.4 L9.4 2.6 L8.4 4 L5 5.2Z" fill="#8E8A84"/>
<path d="M9.6 2 L12.2 1.4 L12.4 3.2 L10 4Z" fill="#A8A49E"/>
<path d="M6 8.8 L8.6 7.8 L8.6 9.4 L6.4 10.2Z M6.8 11 L9.6 10.4 L9.6 11.6 L7 12Z" fill="#F4F2EE"/>
<path d="M9 5.2 L11 4.6 L10.6 6.6 L9 7Z" fill="#6E6A64"/></g></svg>
<span class="t s" style="left:52.00px;top:471px;letter-spacing:-0.235px">425mm AutoCannon II</span>
<span class="t s" style="left:307.50px;top:471px;letter-spacing:-0.105px">18.8</span>
<span class="t s" style="left:340.50px;top:471px;letter-spacing:-0.106px">138.6</span>
<span class="t s" style="left:415.50px;top:471px;letter-spacing:-0.242px">2.1+35</span>
<span class="t s" style="left:481.00px;top:471px;letter-spacing:-0.372px">EMP M</span>
<svg style="left:18.6px;top:489.4px" width="10" height="10" viewBox="0 0 10 10"><defs><linearGradient id="g60" x1="0" y1="0" x2="0" y2="1"><stop offset="0" stop-color="#C4EE84"/><stop offset="0.45" stop-color="#8ED63E"/><stop offset="1" stop-color="#58AC18"/></linearGradient><filter id="f61" x="-30%" y="-30%" width="160%" height="160%"><feGaussianBlur stdDeviation="0.35"/></filter></defs><path d="M.4 5.2 L2 3.8 L3.6 6 L7.8 .4 L9.4 1.2 L4 9.4 L3 9.4 Z" fill="url(#g60)" filter="url(#f61)"/></svg>
<svg style="left:34px;top:486px" width="16" height="16" viewBox="0 0 16 16"><defs><filter id="f63" x="-30%" y="-30%" width="160%" height="160%"><feGaussianBlur stdDeviation="0.35"/></filter></defs><g filter="url(#f63)">
<path d="M10 7.4 L15.2 7.2 L13 9.4 L10.6 9.6Z" fill="#A8A49C" opacity=".7"/>
<path d="M.8 5 L5.6 3 L9 1.8 L12.6 .8 L13.6 2.6 L12.6 5.6 L12 8.4 L12.6 11 L9.6 12.4 L6.2 12 L5.4 9.6 L7 8 L6.2 6.4 L3 7 L1 6.6Z" fill="#3E3A36"/>
<path d="M2 5.2 L6.4 3.4 L9.4 2.6 L8.4 4 L5 5.2Z" fill="#8E8A84"/>
<path d="M9.6 2 L12.2 1.4 L12.4 3.2 L10 4Z" fill="#A8A49E"/>
<path d="M6 8.8 L8.6 7.8 L8.6 9.4 L6.4 10.2Z M6.8 11 L9.6 10.4 L9.6 11.6 L7 12Z" fill="#F4F2EE"/>
<path d="M9 5.2 L11 4.6 L10.6 6.6 L9 7Z" fill="#6E6A64"/></g></svg>
<span class="t s" style="left:52.00px;top:489px;letter-spacing:-0.235px">425mm AutoCannon II</span>
<span class="t s" style="left:307.50px;top:489px;letter-spacing:-0.105px">18.8</span>
<span class="t s" style="left:340.50px;top:489px;letter-spacing:-0.106px">138.6</span>
<span class="t s" style="left:415.50px;top:489px;letter-spacing:-0.242px">2.1+35</span>
<span class="t s" style="left:481.00px;top:489px;letter-spacing:-0.372px">EMP M</span>
<svg style="left:18.6px;top:507.4px" width="10" height="10" viewBox="0 0 10 10"><defs><linearGradient id="g64" x1="0" y1="0" x2="0" y2="1"><stop offset="0" stop-color="#C4EE84"/><stop offset="0.45" stop-color="#8ED63E"/><stop offset="1" stop-color="#58AC18"/></linearGradient><filter id="f65" x="-30%" y="-30%" width="160%" height="160%"><feGaussianBlur stdDeviation="0.35"/></filter></defs><path d="M.4 5.2 L2 3.8 L3.6 6 L7.8 .4 L9.4 1.2 L4 9.4 L3 9.4 Z" fill="url(#g64)" filter="url(#f65)"/></svg>
<svg style="left:34px;top:504px" width="16" height="16" viewBox="0 0 16 16"><defs><filter id="f67" x="-30%" y="-30%" width="160%" height="160%"><feGaussianBlur stdDeviation="0.35"/></filter></defs><g filter="url(#f67)">
<path d="M10 7.4 L15.2 7.2 L13 9.4 L10.6 9.6Z" fill="#A8A49C" opacity=".7"/>
<path d="M.8 5 L5.6 3 L9 1.8 L12.6 .8 L13.6 2.6 L12.6 5.6 L12 8.4 L12.6 11 L9.6 12.4 L6.2 12 L5.4 9.6 L7 8 L6.2 6.4 L3 7 L1 6.6Z" fill="#3E3A36"/>
<path d="M2 5.2 L6.4 3.4 L9.4 2.6 L8.4 4 L5 5.2Z" fill="#8E8A84"/>
<path d="M9.6 2 L12.2 1.4 L12.4 3.2 L10 4Z" fill="#A8A49E"/>
<path d="M6 8.8 L8.6 7.8 L8.6 9.4 L6.4 10.2Z M6.8 11 L9.6 10.4 L9.6 11.6 L7 12Z" fill="#F4F2EE"/>
<path d="M9 5.2 L11 4.6 L10.6 6.6 L9 7Z" fill="#6E6A64"/></g></svg>
<span class="t s" style="left:52.00px;top:507px;letter-spacing:-0.235px">425mm AutoCannon II</span>
<span class="t s" style="left:307.50px;top:507px;letter-spacing:-0.105px">18.8</span>
<span class="t s" style="left:340.50px;top:507px;letter-spacing:-0.106px">138.6</span>
<span class="t s" style="left:415.50px;top:507px;letter-spacing:-0.242px">2.1+35</span>
<span class="t s" style="left:481.00px;top:507px;letter-spacing:-0.372px">EMP M</span>
<svg style="left:18.6px;top:525.4px" width="10" height="10" viewBox="0 0 10 10"><defs><linearGradient id="g68" x1="0" y1="0" x2="0" y2="1"><stop offset="0" stop-color="#C4EE84"/><stop offset="0.45" stop-color="#8ED63E"/><stop offset="1" stop-color="#58AC18"/></linearGradient><filter id="f69" x="-30%" y="-30%" width="160%" height="160%"><feGaussianBlur stdDeviation="0.35"/></filter></defs><path d="M.4 5.2 L2 3.8 L3.6 6 L7.8 .4 L9.4 1.2 L4 9.4 L3 9.4 Z" fill="url(#g68)" filter="url(#f69)"/></svg>
<svg style="left:34px;top:522px" width="16" height="16" viewBox="0 0 16 16"><defs><filter id="f71" x="-30%" y="-30%" width="160%" height="160%"><feGaussianBlur stdDeviation="0.35"/></filter></defs><g filter="url(#f71)">
<path d="M10 7.4 L15.2 7.2 L13 9.4 L10.6 9.6Z" fill="#A8A49C" opacity=".7"/>
<path d="M.8 5 L5.6 3 L9 1.8 L12.6 .8 L13.6 2.6 L12.6 5.6 L12 8.4 L12.6 11 L9.6 12.4 L6.2 12 L5.4 9.6 L7 8 L6.2 6.4 L3 7 L1 6.6Z" fill="#3E3A36"/>
<path d="M2 5.2 L6.4 3.4 L9.4 2.6 L8.4 4 L5 5.2Z" fill="#8E8A84"/>
<path d="M9.6 2 L12.2 1.4 L12.4 3.2 L10 4Z" fill="#A8A49E"/>
<path d="M6 8.8 L8.6 7.8 L8.6 9.4 L6.4 10.2Z M6.8 11 L9.6 10.4 L9.6 11.6 L7 12Z" fill="#F4F2EE"/>
<path d="M9 5.2 L11 4.6 L10.6 6.6 L9 7Z" fill="#6E6A64"/></g></svg>
<span class="t s" style="left:52.00px;top:525px;letter-spacing:-0.235px">425mm AutoCannon II</span>
<span class="t s" style="left:307.50px;top:525px;letter-spacing:-0.105px">18.8</span>
<span class="t s" style="left:340.50px;top:525px;letter-spacing:-0.106px">138.6</span>
<span class="t s" style="left:415.50px;top:525px;letter-spacing:-0.242px">2.1+35</span>
<span class="t s" style="left:481.00px;top:525px;letter-spacing:-0.372px">EMP M</span>
<span class="t" style="left:25.60px;top:555px;letter-spacing:-0.341px;font-size:12px;line-height:14px;font-weight:bold">Rig slots</span>
<div class="gl" style="top:570px"></div>
<svg style="left:34px;top:583px" width="17" height="16" viewBox="0 0 17 16"><defs><linearGradient id="g72" x1="0" y1="0" x2="1" y2="1"><stop offset="0" stop-color="#6A6672"/><stop offset="0.5" stop-color="#46424C"/><stop offset="1" stop-color="#1E1C22"/></linearGradient><filter id="f73" x="-30%" y="-30%" width="160%" height="160%"><feGaussianBlur stdDeviation="0.35"/></filter></defs><g filter="url(#f73)"><path d="M3.6 .6 L12.8 .6 L15.8 3.4 L15.8 12.2 L12.8 15.2 L3.6 15.2 L.6 12.2 L.6 3.4Z" fill="url(#g72)" stroke="#26242A" stroke-width="1"/>
<path d="M8.6 11.6 L13 4.4 L13 8 L10.4 12.4Z" fill="#141216" opacity=".8"/>
<path d="M3.6 11.6 L9.8 2.6 L12.2 3.4 L11.6 5 L10.4 4.8 L5.2 12.6Z" fill="#D8C4A0"/>
<path d="M9.8 2.6 L12.2 3.4 L11.8 4.4 L9.4 3.6Z" fill="#FFF8E8"/>
<path d="M3.6 11.6 L4.6 10.2 L6 11.4 L5.2 12.6Z" fill="#9A7A50"/></g></svg>
<span class="t s" style="left:52.00px;top:586px;letter-spacing:-0.298px">Medium Capacitor Control Circuit I</span>
<span class="t s" style="left:382.50px;top:586px;letter-spacing:-0.180px">+4.5</span>
<svg style="left:34px;top:601px" width="17" height="16" viewBox="0 0 17 16"><defs><linearGradient id="g74" x1="0" y1="0" x2="1" y2="1"><stop offset="0" stop-color="#6A6672"/><stop offset="0.5" stop-color="#46424C"/><stop offset="1" stop-color="#1E1C22"/></linearGradient><filter id="f75" x="-30%" y="-30%" width="160%" height="160%"><feGaussianBlur stdDeviation="0.35"/></filter></defs><g filter="url(#f75)"><path d="M3.6 .6 L12.8 .6 L15.8 3.4 L15.8 12.2 L12.8 15.2 L3.6 15.2 L.6 12.2 L.6 3.4Z" fill="url(#g74)" stroke="#26242A" stroke-width="1"/>
<path d="M8.6 11.6 L13 4.4 L13 8 L10.4 12.4Z" fill="#141216" opacity=".8"/>
<path d="M3.6 11.6 L9.8 2.6 L12.2 3.4 L11.6 5 L10.4 4.8 L5.2 12.6Z" fill="#D8C4A0"/>
<path d="M9.8 2.6 L12.2 3.4 L11.8 4.4 L9.4 3.6Z" fill="#FFF8E8"/>
<path d="M3.6 11.6 L4.6 10.2 L6 11.4 L5.2 12.6Z" fill="#9A7A50"/></g></svg>
<span class="t s" style="left:52.00px;top:604px;letter-spacing:-0.291px">Medium Capacitor Control Circuit II</span>
<span class="t s" style="left:382.50px;top:604px;letter-spacing:-0.273px">+6</span>
<svg style="left:34px;top:619px" width="17" height="16" viewBox="0 0 17 16"><defs><linearGradient id="g76" x1="0" y1="0" x2="1" y2="1"><stop offset="0" stop-color="#6A6672"/><stop offset="0.5" stop-color="#46424C"/><stop offset="1" stop-color="#1E1C22"/></linearGradient><filter id="f77" x="-30%" y="-30%" width="160%" height="160%"><feGaussianBlur stdDeviation="0.35"/></filter></defs><g filter="url(#f77)"><path d="M3.6 .6 L12.8 .6 L15.8 3.4 L15.8 12.2 L12.8 15.2 L3.6 15.2 L.6 12.2 L.6 3.4Z" fill="url(#g76)" stroke="#26242A" stroke-width="1"/>
<path d="M8.6 11.6 L13 4.4 L13 8 L10.4 12.4Z" fill="#141216" opacity=".8"/>
<path d="M3.6 11.6 L9.8 2.6 L12.2 3.4 L11.6 5 L10.4 4.8 L5.2 12.6Z" fill="#D8C4A0"/>
<path d="M9.8 2.6 L12.2 3.4 L11.8 4.4 L9.4 3.6Z" fill="#FFF8E8"/>
<path d="M3.6 11.6 L4.6 10.2 L6 11.4 L5.2 12.6Z" fill="#9A7A50"/></g></svg>
<span class="t s" style="left:52.00px;top:622px;letter-spacing:-0.291px">Medium Capacitor Control Circuit II</span>
<span class="t s" style="left:382.50px;top:622px;letter-spacing:-0.273px">+6</span>
<span class="t s" style="left:12.00px;top:673px;letter-spacing:-0.245px">Drones</span>
<span class="t s" style="left:109.00px;top:673px;letter-spacing:-0.185px">Description</span>
<span class="t s" style="left:250.00px;top:673px;letter-spacing:-0.120px">Boosters\Implants</span>
<span class="t s" style="left:410.00px;top:673px;letter-spacing:-0.102px">Projected effects</span>
<div class="a" style="left:52px;top:669px;width:1px;height:17px;background:#C5C2B2;box-shadow:1px 0 0 #fff"></div>
<div class="a" style="left:532px;top:669px;width:1px;height:17px;background:#C5C2B2;box-shadow:1px 0 0 #fff"></div>
<div class="a" style="left:537px;top:672px;width:40px;height:13px;box-sizing:border-box;border:1px solid #B9B5A5;border-radius:3px;background:#E6E3D4"></div>
<span class="t s" style="left:545.60px;top:673px;letter-spacing:-0.316px;color:#FBFAF4">Stats</span>
<div class="gb" style="left:584px;top:37px;width:258px;height:81px"></div>
<div class="a" style="left:590px;top:37px;width:79px;height:1px;background:#ECE9D8"></div>
<span class="t s" style="left:592.00px;top:32px;letter-spacing:-0.190px;color:#0E3CBE">Ship Resources</span>
<svg style="left:588px;top:44px" width="30" height="24" viewBox="0 0 30 24"><defs><filter id="f79" x="-30%" y="-30%" width="160%" height="160%"><feGaussianBlur stdDeviation="0.45"/></filter><filter id="f80" x="-30%" y="-30%" width="160%" height="160%"><feGaussianBlur stdDeviation="1.1"/></filter></defs>
<path d="M12 19 L27 13 L29 16 L17 23Z" fill="#B4AE9E" opacity=".7" filter="url(#f80)"/>
<g filter="url(#f79)">
<path d="M1.4 10.8 L4 8.8 L13.6 4.6 L16.4 5.4 L17 7.8 L6.6 12 L2.4 12.8Z" fill="#3A2E26"/>
<path d="M3.4 9.8 L13.6 5.4 L14.8 6.2 L5 10.6Z" fill="#B4A898"/>
<path d="M1.4 10.8 L2.8 10 L3.6 12 L2.4 12.8Z" fill="#140E0A"/>
<path d="M7 9.6 L9 8.8 L9.6 10.2 L7.6 11Z M11 8 L12.6 7.4 L13.2 8.8 L11.6 9.4Z" fill="#E4DCD0"/>
<path d="M14.4 3.4 L18 1.8 L23.6 1.8 L25.8 3.8 L25.4 8.4 L23.4 12.4 L19 13.4 L15.4 10.6 L15.6 6Z" fill="#3E3229"/>
<path d="M17 3 L22.6 2.6 L24 4 L19.6 5.6 L16.8 5Z" fill="#CDBDA5"/>
<path d="M19.4 6.6 L23.8 5.4 L23.6 9 L20.6 10.6Z" fill="#7A6650"/>
<path d="M20.4 7.4 L22.4 6.8 L22.2 8.2 L20.8 8.8Z" fill="#F0E8DC"/>
<path d="M16 9 L19 10.6 L18.6 13 L16 11.6Z" fill="#1A1410"/>
<path d="M16.4 12.6 L21.6 12.4 L21 16.6 L16.6 17.6 L14.2 15.4Z" fill="#2E251E"/>
<path d="M17.6 13.4 L20.4 13.2 L20 15.4 L17.6 15.8Z" fill="#8E7E68"/>
<path d="M9 18.4 L14.4 16 L21.6 16.4 L24 18.4 L22.6 20.8 L13.6 22.6 L9.4 21.4Z" fill="#3E342B"/>
<path d="M10.4 18.6 L14.8 16.8 L20.6 17.2 L15.4 19.4Z" fill="#CFC3B3"/>
<path d="M10 20.8 L13.6 21.6 L13.4 22.4 L10 21.6Z M16 20.6 L20 19.6 L20 20.6 L16 21.6Z" fill="#E8E0D4"/>
</g></svg>
<svg style="left:588px;top:68px" width="30" height="20" viewBox="0 0 30 20"><defs><filter id="f82" x="-30%" y="-30%" width="160%" height="160%"><feGaussianBlur stdDeviation="0.45"/></filter><filter id="f83" x="-30%" y="-30%" width="160%" height="160%"><feGaussianBlur stdDeviation="1.1"/></filter></defs>
<path d="M4 14 L20 18 L29 12 L29 15 L20 20 L3 17Z" fill="#A8A08C" opacity=".8" filter="url(#f83)"/>
<g filter="url(#f82)">
<path d="M3.6 4 L7 2.4 L21 3 L27 5.6 L26.6 11 L21.4 15.6 L5 12 L3.4 8.6Z" fill="#7A7A78"/>
<path d="M6.4 3 L20.6 3.6 L25.6 5.8 L21.4 7.4 L5.4 5Z" fill="#F0F0EC"/>
<path d="M4.6 5.4 L21 7.8 L21 14.8 L5.4 11.4Z" fill="#2E2E30"/>
<path d="M6.4 6.6 L9 7 L9 11.2 L6.6 10.6Z M10.6 7.2 L13.2 7.6 L13.2 12.2 L10.6 11.6Z M14.8 7.8 L17.6 8.2 L17.6 13.2 L14.8 12.6Z" fill="#E4E4E2"/>
<path d="M7 7.6 L8.4 7.8 L8.4 10.4 L7 10Z M11.2 8.2 L12.6 8.4 L12.6 11.4 L11.2 11Z M15.4 8.8 L17 9 L17 12.4 L15.4 12Z" fill="#5A5A5C"/>
<path d="M21.4 7.6 L26.6 5.8 L26.4 10.8 L21.4 15.2Z" fill="#5A5A5C"/>
<path d="M22.6 10 L25.6 8.2 L25.4 9.8 L22.6 11.8Z" fill="#E8E8E8"/>
</g></svg>
<svg style="left:588px;top:91px" width="32" height="24" viewBox="0 0 32 24"><defs><filter id="f85" x="-30%" y="-30%" width="160%" height="160%"><feGaussianBlur stdDeviation="0.45"/></filter><filter id="f86" x="-30%" y="-30%" width="160%" height="160%"><feGaussianBlur stdDeviation="1.1"/></filter></defs>
<g filter="url(#f85)">
<circle cx="11.4" cy="6" r="4.4" fill="none" stroke="#3E4250" stroke-width="2.6"/>
<path d="M7.6 3.4 Q11 .6 14.6 3" stroke="#A8AEBC" stroke-width=".9" fill="none"/>
<path d="M14.6 4 L19 4.4 L26 6.2 L28 8.6 L27 11.4 L23 12.6 L16.4 10.6 L14.6 8Z" fill="#2E3246"/>
<path d="M18 5.4 L25 7 L26 8.4 L24 9 L18.4 7.6Z" fill="#6A78A8"/>
<path d="M19.6 6.4 L21 6.8 L20.8 8 L19.4 7.6Z M22.4 7 L23.8 7.4 L23.6 8.6 L22.2 8.2Z" fill="#C8D0E8"/>
<path d="M27 9 L31.6 10 L31.4 11.2 L27 10.8Z" fill="#2A2C38"/>
<path d="M.6 10.4 L3.4 8.6 L8 10 L24.6 17.4 L26 20.4 L24.6 23 L21 23.4 L2 14.6 L.4 12.6Z" fill="#3E3E46"/>
<path d="M2 10.6 L4 9.6 L23.6 18 L22 19.6Z" fill="#A4A4AC"/>
<path d="M20.6 19.6 L24.6 18.4 L25 21 L22 22.6Z" fill="#77777F"/>
<path d="M2 13.8 L20.6 22.4" stroke="#1E1E24" stroke-width="1"/>
</g></svg>
<span class="t s" style="left:621.00px;top:48px;letter-spacing:-0.078px">: 0</span>
<span class="t s" style="left:621.00px;top:72px;letter-spacing:-0.078px">: 1</span>
<span class="t s" style="left:621.00px;top:96px;letter-spacing:-0.078px">: 0</span>
<div class="a" style="left:648px;top:46px;width:1px;height:66px;background:#C0BDAE;box-shadow:1px 0 0 #F8F7F0"></div>
<svg style="left:654px;top:42px" width="28" height="24" viewBox="0 0 28 24"><defs><linearGradient id="g87" x1="0" y1="0" x2="1" y2="1"><stop offset="0" stop-color="#2C8884"/><stop offset="0.5" stop-color="#34A8A0"/><stop offset="1" stop-color="#1E6468"/></linearGradient><filter id="f88" x="-30%" y="-30%" width="160%" height="160%"><feGaussianBlur stdDeviation="0.45"/></filter><filter id="f89" x="-30%" y="-30%" width="160%" height="160%"><feGaussianBlur stdDeviation="1.1"/></filter></defs>
<path d="M4 19 L18 24 L27 14 L27 18 L18 25Z" fill="#A8A08C" opacity=".6" filter="url(#f89)"/>
<g filter="url(#f88)">
<path d="M.8 12.8 L13.6 1.4 L27 6.4 L25.4 14.4 L17.4 22.4 Z" fill="#1E444C"/>
<path d="M1.6 12.4 L13.8 2.2 L26 6.8 L16.6 15.4Z" fill="url(#g87)"/>
<path d="M7.4 10 L14 4.6 L21 7.2 L15.2 12.2Z" fill="#58DCC8"/>
<path d="M10.4 9.2 L14.2 6.2 L17.8 7.6 L14.6 10.4Z" fill="#A4F8E8"/>
<path d="M.8 12.8 L16.6 15.4 L17.4 22.4Z" fill="#14323A"/>
<path d="M16.6 15.4 L26 6.8 L25.4 14.4 L17.4 22.4Z" fill="#547276"/>
<path d="M1.6 12.4 L13.8 2.2 L26 6.8" stroke="#8CD8D0" stroke-width=".6" fill="none"/>
</g></svg>
<svg style="left:657px;top:67px" width="24" height="22" viewBox="0 0 24 22"><defs><filter id="f91" x="-30%" y="-30%" width="160%" height="160%"><feGaussianBlur stdDeviation="0.45"/></filter><filter id="f92" x="-30%" y="-30%" width="160%" height="160%"><feGaussianBlur stdDeviation="1.1"/></filter></defs><g filter="url(#f91)"><g fill="none" stroke="#5E5A52" stroke-width="1.9"><ellipse cx="11.4" cy="10.6" rx="10.2" ry="3.7" transform="rotate(18 11.4 10.6)"/><ellipse cx="11.4" cy="10.6" rx="10.2" ry="3.7" transform="rotate(-42 11.4 10.6)"/><ellipse cx="11.4" cy="10.6" rx="9.8" ry="3.7" transform="rotate(80 11.4 10.6)"/></g><g fill="none" stroke="#D8D4CA" stroke-width=".7" stroke-dasharray="9 14"><ellipse cx="11.2" cy="10.3" rx="10.2" ry="3.7" transform="rotate(18 11.4 10.6)"/><ellipse cx="11.2" cy="10.3" rx="10.2" ry="3.7" transform="rotate(-42 11.4 10.6)"/><ellipse cx="11.2" cy="10.3" rx="9.8" ry="3.7" transform="rotate(80 11.4 10.6)"/></g><circle cx="11.4" cy="10.6" r="2.2" fill="#4E4A44"/><circle cx="10.9" cy="10.1" r=".9" fill="#D8D4CC"/></g></svg>
<svg style="left:657px;top:91px" width="24" height="24" viewBox="0 0 24 24"><defs><filter id="f94" x="-30%" y="-30%" width="160%" height="160%"><feGaussianBlur stdDeviation="0.45"/></filter><filter id="f95" x="-30%" y="-30%" width="160%" height="160%"><feGaussianBlur stdDeviation="1.1"/></filter></defs>
<g filter="url(#f94)">
<circle cx="11.6" cy="6.6" r="5.8" fill="#DCE6F4" opacity=".85"/><circle cx="11.6" cy="6.6" r="5.8" fill="none" stroke="#AAB8D0" stroke-width=".8"/>
<path d="M8.4 5.6 Q11 2.6 14 4.6" stroke="#fff" stroke-width="1.2" fill="none"/>
<path d="M8.6 9.4 L14.6 7.8 L19 10.6 L18.4 14 L15.4 16.6 L14 22 L11.4 22.4 L10.6 17 L8 14.4Z" fill="#4E5664"/>
<path d="M9.6 9.8 L14.4 8.6 L17.4 10.6 L13 12Z" fill="#C4D0E0"/>
<path d="M12 12.8 L15 12 L14.4 15.4 L12.4 16.2Z" fill="#8A96A8"/>
<path d="M18.4 11.6 L23.4 13.6 L18.4 14.2Z M8.4 13 L2.4 17 L9 15.2Z M4 9.6 L9 10.2 L8.6 11.4Z" fill="#3A404C"/>
<path d="M11.6 17 L13.6 16.6 L13.2 21 L12 21.4Z" fill="#9AA4B4"/>
</g></svg>
<div class="pb" style="left:688px;top:43px;width:145px"><div class="pf" style="width:139px"></div></div>
<div class="pb" style="left:688px;top:67px;width:145px"><div class="pf" style="width:139px"></div></div>
<div class="pb" style="left:688px;top:91px;width:145px"></div>
<span class="t s" style="left:688.00px;top:54px;letter-spacing:0.047px;color:#C80000">630.5 / 418.75</span>
<span class="t s" style="left:688.00px;top:78px;letter-spacing:0.006px;color:#C80000">75894.61 / 1187.5</span>
<span class="t s" style="left:688.00px;top:101px;letter-spacing:0.078px">0 / 25</span>
<span class="t s" style="left:810.00px;top:101px;letter-spacing:0.319px">0 / 5</span>
<div class="gb" style="left:584px;top:127px;width:258px;height:554px"></div>
<div class="a" style="left:590px;top:127px;width:81px;height:1px;background:#ECE9D8"></div>
<span class="t s" style="left:592.00px;top:122px;letter-spacing:-0.329px;color:#0E3CBE">Ship Parameters</span>
<div class="gb" style="left:593px;top:140px;width:240px;height:61px"></div>
<div class="a" style="left:599px;top:140px;width:154px;height:1px;background:#ECE9D8"></div>
<span class="t s" style="left:601.00px;top:135px;letter-spacing:-0.102px;color:#0E3CBE">Hitpoints (Effective HP: 32,664)</span>
<svg style="left:600px;top:147px" width="25" height="25" viewBox="0 0 25 25"><defs><radialGradient id="g96" cx="0.5" cy="0.5" r="0.5"><stop offset="0" stop-color="#FFFFFF" stop-opacity="1"/><stop offset="0.45" stop-color="#D4F0FC" stop-opacity="0.95"/><stop offset="0.8" stop-color="#B8E4F8" stop-opacity="0.5"/><stop offset="1" stop-color="#B8E4F8" stop-opacity="0"/></radialGradient><radialGradient id="g97" cx="0.5" cy="0.5" r="0.6"><stop offset="0" stop-color="#E8FCFF"/><stop offset="0.4" stop-color="#A8D8E8"/><stop offset="1" stop-color="#4A5660"/></radialGradient><filter id="f98" x="-30%" y="-30%" width="160%" height="160%"><feGaussianBlur stdDeviation="0.45"/></filter><filter id="f99" x="-30%" y="-30%" width="160%" height="160%"><feGaussianBlur stdDeviation="1.1"/></filter></defs>
<ellipse cx="10" cy="8" rx="9.6" ry="8.4" fill="url(#g96)"/>
<g filter="url(#f98)"><ellipse cx="12" cy="19" rx="11.6" ry="4.8" fill="#30363C"/>
<ellipse cx="12" cy="18.4" rx="10" ry="3.6" fill="#7E8A92"/>
<ellipse cx="11.6" cy="18" rx="5.4" ry="2.2" fill="url(#g97)"/>
<path d="M9 17.4 L10 5 L13 5 L14 17.4Z" fill="#E0F6FF" opacity=".75"/>
<path d="M1.4 20 Q6 23.6 12 23.6" stroke="#C8D0D4" stroke-width=".8" fill="none"/></g></svg>
<span class="t s" style="left:630.00px;top:153px;letter-spacing:-0.266px">: 3250</span>
<svg style="left:678px;top:149px" width="26" height="23" viewBox="0 0 26 23"><defs><linearGradient id="g100" x1="0" y1="0" x2="1" y2="1"><stop offset="0" stop-color="#C4C8CC"/><stop offset="0.5" stop-color="#999DA1"/><stop offset="1" stop-color="#686C70"/></linearGradient><filter id="f102" x="-30%" y="-30%" width="160%" height="160%"><feGaussianBlur stdDeviation="0.45"/></filter><filter id="f103" x="-30%" y="-30%" width="160%" height="160%"><feGaussianBlur stdDeviation="1.1"/></filter></defs>
<path d="M3 14 L14 19.4 L22 15.6 L22 18 L13 22 L3 17Z" fill="#62665E" opacity=".85" filter="url(#f103)"/>
<g filter="url(#f102)">
<path d="M1.5 9 L3 3.5 L7 1.5 L16 3 L21 6.5 L24.5 10 L23 11.5 L19 9.5 L16 11 L14.5 16.5 L13 18 L6 14.5 L2 12Z" fill="url(#g100)"/>
<path d="M16 11 L14.5 16.5 L13 18 L12.6 16.4 L14 10.6 L18 8.4 L19 9.5Z" fill="#54585C"/>
<path d="M19.6 7.6 L24.5 10 L23.4 12 L19.6 10.4Z" fill="#2E3034"/>
<path d="M3.4 4.6 L7 2.4 L15.6 3.8 L20 7" stroke="#ECF0F4" stroke-width=".9" fill="none" opacity=".9"/>
<path d="M4 9.6 L8 7.4 M6 11.6 L10.6 9" stroke="#E4E8EC" stroke-width=".8" opacity=".7"/>
<path d="M2 12 L6 14.5 L13 18" stroke="#5A5E62" stroke-width=".9" fill="none"/>
</g></svg>
<span class="t s" style="left:709.00px;top:153px;letter-spacing:-0.266px">: 2188</span>
<svg style="left:759.5px;top:148px" width="21" height="23" viewBox="0 0 21 23"><defs><linearGradient id="g104" x1="0" y1="0" x2="0.3" y2="1"><stop offset="0" stop-color="#DAD2C2"/><stop offset="0.5" stop-color="#B0A696"/><stop offset="1" stop-color="#5E5448"/></linearGradient><filter id="f106" x="-30%" y="-30%" width="160%" height="160%"><feGaussianBlur stdDeviation="0.45"/></filter><filter id="f107" x="-30%" y="-30%" width="160%" height="160%"><feGaussianBlur stdDeviation="1.1"/></filter></defs>
<ellipse cx="12.6" cy="19.6" rx="8.6" ry="3" fill="#8A826E" opacity=".55" filter="url(#f107)"/>
<g filter="url(#f106)">
<path d="M10 .8 L19 5.6 L19 15.6 L10 20.6 L1 15.6 L1 5.6Z" fill="url(#g104)"/>
<path d="M10 10.6 L19 5.6 L19 15.6Z" fill="#8E8476" opacity=".8"/>
<path d="M10 10.6 L19 15.6 L10 20.6 L1 15.6Z" fill="#6E6458" opacity=".85"/>
<path d="M1 5.6 L10 10.6 L19 5.6" stroke="#F0E8D8" stroke-width="1" fill="none"/>
<path d="M10 .8 L19 5.6 L19 15.6 L10 20.6 L1 15.6 L1 5.6Z" fill="none" stroke="#4A3E32" stroke-width="1.3"/>
<path d="M10 1.6 L10 10.6 L2 15.2 M10 10.6 L18 15.2" stroke="#2A2018" stroke-width="1.7" fill="none"/>
<path d="M10 10.6 L10 20" stroke="#8A8070" stroke-width=".8"/>
</g></svg>
<span class="t s" style="left:786.00px;top:153px;letter-spacing:-0.099px">: 2014</span>
<svg style="left:599px;top:177px" width="16" height="16" viewBox="0 0 16 16"><defs><radialGradient id="g108" cx="0.45" cy="0.45" r="0.6"><stop offset="0" stop-color="#6CD0F4"/><stop offset="0.55" stop-color="#2E9CD4"/><stop offset="1" stop-color="#1E78B0"/></radialGradient><filter id="f109" x="-30%" y="-30%" width="160%" height="160%"><feGaussianBlur stdDeviation="0.4"/></filter></defs><g filter="url(#f109)">
<path d="M.4 7.4 L4.6 1.6 L10.6 .4 L15 5.4 L14.6 10.6 L9.6 14.8 L3.6 14 L.8 10.4Z" fill="#9CCCE0" opacity=".7"/>
<path d="M1.4 7.4 L5 2.4 L10.4 1.4 L14 5.6 L13.6 10.2 L9.4 13.8 L4 13 L1.6 10Z" fill="url(#g108)"/>
<path d="M3 4.6 L9.6 6.4 L7.6 7.8 L13 12.4 L5 9.4 L7.2 8Z" fill="#FFFFFF"/>
</g></svg>
<div class="vb" style="left:615.5px;top:174.5px"></div>
<span class="t s" style="left:622.50px;top:172px;letter-spacing:-0.541px">87.1%</span>
<span class="t s" style="left:622.50px;top:184px;letter-spacing:-0.677px">90%</span>
<svg style="left:655.6px;top:177px" width="17" height="15" viewBox="0 0 17 15"><defs><filter id="f111" x="-30%" y="-30%" width="160%" height="160%"><feGaussianBlur stdDeviation="0.4"/></filter></defs><g filter="url(#f111)"><g fill="none" stroke="#DC3020" stroke-width="2.5" stroke-linecap="round"><path d="M3 3.4 Q6 1.2 9 3 T15.6 1.8"/><path d="M1.6 7.6 Q5.4 5.2 8.6 7.2 T15.6 6"/><path d="M3 11.8 Q6 9.6 9 11.4 T15.6 10.2"/></g><g fill="none" stroke="#F8A494" stroke-width=".8" stroke-linecap="round"><path d="M3 2.8 Q6 .6 9 2.4 T15 1.4"/><path d="M2 7 Q5.4 4.6 8.6 6.6 T15 5.6"/><path d="M3 11.2 Q6 9 9 10.8 T15 9.8"/></g></g></svg>
<div class="vb" style="left:672.5px;top:174.5px"></div>
<span class="t s" style="left:682.00px;top:172px;letter-spacing:-0.541px">79.3%</span>
<span class="t s" style="left:682.00px;top:184px;letter-spacing:-0.541px">67.5%</span>
<svg style="left:716.4px;top:177px" width="14" height="14" viewBox="0 0 14 14"><defs><radialGradient id="g112" cx="0.5" cy="0.5" r="0.5"><stop offset="0" stop-color="#FFFFFF" stop-opacity="1"/><stop offset="0.55" stop-color="#FFFFFF" stop-opacity="0.9"/><stop offset="1" stop-color="#FFFFFF" stop-opacity="0"/></radialGradient><filter id="f113" x="-30%" y="-30%" width="160%" height="160%"><feGaussianBlur stdDeviation="0.4"/></filter></defs><g filter="url(#f113)">
<path d="M.6 5.6 L8 6.4 L10.6 2 L12.6 3 L12.6 12 L10.6 13.4 L8.6 9.6 L3.6 11.6 L6.4 8.4Z" fill="#ABABA7"/>
<path d="M1.6 6 L8 7.4" stroke="#6A6A68" stroke-width=".8"/>
<path d="M9.6 3.2 L11.8 2.8 L12 12 L10 11Z" fill="#D8D8D6"/>
<circle cx="10" cy="7.8" r="3.6" fill="url(#g112)"/>
</g></svg>
<div class="vb" style="left:730.5px;top:174.5px"></div>
<span class="t s" style="left:739.50px;top:172px;letter-spacing:-0.677px">69%</span>
<span class="t s" style="left:739.50px;top:184px;letter-spacing:-0.677px">25%</span>
<svg style="left:774px;top:177px" width="16" height="16" viewBox="0 0 16 16"><defs><radialGradient id="g114" cx="0.5" cy="0.5" r="0.5"><stop offset="0" stop-color="#FFFFF0"/><stop offset="0.3" stop-color="#FFE08C"/><stop offset="0.55" stop-color="#F08A30"/><stop offset="0.8" stop-color="#A0481C" stop-opacity="0.9"/><stop offset="1" stop-color="#6A3014" stop-opacity="0"/></radialGradient><filter id="f115" x="-30%" y="-30%" width="160%" height="160%"><feGaussianBlur stdDeviation="0.4"/></filter></defs><g filter="url(#f115)">
<path d="M1.4 2 L5.6 .8 L9 2.2 L13.6 1 L15 5.6 L14 9 L15.4 13.6 L10 15 L7 13.8 L2 15.4 L1.6 10 L.6 6Z" fill="#5E3018"/>
<path d="M2.4 3 L5.6 2 L4.6 5Z M11 2.6 L13.6 2.2 L13.8 5Z M2.6 11 L2.8 14 L5.6 13.4Z" fill="#B87840"/>
<circle cx="8.4" cy="8.4" r="6" fill="url(#g114)"/>
</g></svg>
<div class="vb" style="left:789.5px;top:174.5px"></div>
<span class="t s" style="left:797.50px;top:172px;letter-spacing:-0.541px">74.1%</span>
<span class="t s" style="left:797.50px;top:184px;letter-spacing:-0.677px">10%</span>
<div class="gb" style="left:593px;top:209px;width:76px;height:35px"></div>
<div class="a" style="left:599px;top:209px;width:45px;height:1px;background:#ECE9D8"></div>
<span class="t s" style="left:601.00px;top:204px;color:#0E3CBE">Defence</span>
<svg style="left:600px;top:216.6px" width="23" height="23" viewBox="0 0 23 23"><defs><linearGradient id="g116" x1="0" y1="0" x2="1" y2="0"><stop offset="0" stop-color="#6A5E50"/><stop offset="0.22" stop-color="#F0EEE8"/><stop offset="0.4" stop-color="#B4AEA4"/><stop offset="0.52" stop-color="#3E342C"/><stop offset="0.72" stop-color="#4A4038"/><stop offset="0.9" stop-color="#8A8278"/><stop offset="1" stop-color="#5A5248"/></linearGradient><filter id="f118" x="-30%" y="-30%" width="160%" height="160%"><feGaussianBlur stdDeviation="0.45"/></filter><filter id="f119" x="-30%" y="-30%" width="160%" height="160%"><feGaussianBlur stdDeviation="1.1"/></filter></defs>
<g filter="url(#f118)">
<path d="M1.4 1 L21 1 Q22 1 22 2.4 L22 11 Q21.6 18.6 11.6 22.4 Q1.4 18.6 1 11 L1 2.4 Q1 1 1.4 1Z" fill="#9CE4E4" opacity=".85"/>
<path d="M3.6 2.6 L19.4 2.6 L19.4 11 Q19 16.8 11.6 20 Q4 16.8 3.6 11Z" fill="url(#g116)"/>
<path d="M3.6 2.6 L19.4 2.6 L19.4 4 L3.6 4Z" fill="#2A221C" opacity=".55"/>
</g></svg>
<span class="t s" style="left:628.00px;top:215px;letter-spacing:-0.294px">: 476</span>
<span class="t s" style="left:628.00px;top:227px;letter-spacing:-0.266px">: 4423</span>
<div class="gb" style="left:676px;top:209px;width:157px;height:35px"></div>
<div class="a" style="left:682px;top:209px;width:106px;height:1px;background:#ECE9D8"></div>
<span class="t s" style="left:684.00px;top:204px;letter-spacing:-0.218px;color:#0E3CBE">Capacitor (Lasts: 11s)</span>
<svg style="left:683px;top:216.6px" width="20" height="22" viewBox="0 0 20 22"><defs><filter id="f122" x="-30%" y="-30%" width="160%" height="160%"><feGaussianBlur stdDeviation="0.45"/></filter><filter id="f123" x="-30%" y="-30%" width="160%" height="160%"><feGaussianBlur stdDeviation="1.1"/></filter></defs>
<g filter="url(#f122)">
<path d="M1.4 14.4 L7 2 L11.6 .8 L15 2.6 L14.4 6 L18.6 7 L19 10 L12.4 20.6 L9.4 21 L3 18.4Z" fill="#4A3A2C"/>
<path d="M2.8 14 L8 2.8 L10.6 2.4 L5.4 15.4Z" fill="#FBF3E4"/>
<path d="M10.6 2.4 L13.6 3.6 L8.4 16.6 L5.4 15.4Z" fill="#9A8264"/>
<path d="M13 8.4 L18.4 8 L16.6 11.4 L11.6 12Z" fill="#EDE4D2"/>
<path d="M11 14 L16.4 12.6 L12.6 19.4 L10 19.6Z" fill="#1E1610"/>
<path d="M3 18.4 L5.4 15.4 L8.4 16.6 L9.4 21Z" fill="#6A5640"/>
</g></svg>
<span class="t s" style="left:709.00px;top:220px;letter-spacing:-0.099px">: 2070</span>
<svg style="left:765px;top:216.6px" width="23" height="21" viewBox="0 0 23 21"><defs><linearGradient id="g124" x1="0" y1="0" x2="0.4" y2="1"><stop offset="0" stop-color="#D8D0B0"/><stop offset="0.3" stop-color="#8A8264"/><stop offset="0.6" stop-color="#4A442E"/><stop offset="1" stop-color="#1E1A10"/></linearGradient><radialGradient id="g125" cx="0.4" cy="0.4" r="0.6"><stop offset="0" stop-color="#FFFFFF"/><stop offset="0.5" stop-color="#C8C8C8"/><stop offset="1" stop-color="#6A6A6A"/></radialGradient><filter id="f126" x="-30%" y="-30%" width="160%" height="160%"><feGaussianBlur stdDeviation="0.45"/></filter><filter id="f127" x="-30%" y="-30%" width="160%" height="160%"><feGaussianBlur stdDeviation="1.1"/></filter></defs>
<g filter="url(#f126)">
<path d="M1.4 13 L4 15.6 L14 20.4 L20.6 19.6 L22.4 16 L19 16.6Z" fill="#2A2618"/>
<path d="M2 6.6 Q2.4 1.2 8 1.2 L15 4 Q21 7 21.4 12.4 Q20.6 18 15.4 18.4 L5 14 Q1.6 11.6 2 6.6Z" fill="url(#g124)"/>
<ellipse cx="16.6" cy="11.6" rx="4.2" ry="6.2" transform="rotate(-28 16.6 11.6)" fill="url(#g125)"/>
<ellipse cx="16.8" cy="11.8" rx="2" ry="3.4" transform="rotate(-28 16.8 11.8)" fill="#8A8A8A"/>
<path d="M4 4.6 Q6 2 9.6 2.6" stroke="#F4F0DC" stroke-width="1.1" fill="none"/>
</g></svg>
<span class="t s" style="left:793.00px;top:215px;letter-spacing:-0.321px">- 224.4</span>
<span class="t s" style="left:793.00px;top:227px;letter-spacing:-0.369px">+29.8</span>
<div class="gb" style="left:593px;top:252px;width:76px;height:58px"></div>
<div class="a" style="left:599px;top:252px;width:50px;height:1px;background:#ECE9D8"></div>
<span class="t s" style="left:601.00px;top:247px;letter-spacing:-0.323px;color:#0E3CBE">Firepower</span>
<svg style="left:595.6px;top:258.6px" width="28" height="22" viewBox="0 0 28 22"><defs><filter id="f130" x="-30%" y="-30%" width="160%" height="160%"><feGaussianBlur stdDeviation="0.45"/></filter><filter id="f131" x="-30%" y="-30%" width="160%" height="160%"><feGaussianBlur stdDeviation="1.1"/></filter></defs>
<path d="M12 14 L27 11 L27 14 L15 18Z" fill="#A8A08C" opacity=".75" filter="url(#f131)"/>
<g filter="url(#f130)">
<path d="M1 8 L3.6 6.4 L13.6 2.6 L15 4.4 L14.6 7 L5 10.6 L1.6 10.6Z" fill="#5A5C5E"/>
<path d="M2.6 7.6 L13.4 3.4 L13.8 4.6 L4 8.6Z" fill="#F0F2F4"/>
<path d="M12.6 2.4 L17 .8 L22.6 1 L24.6 3 L24 7 L21 9.6 L16 9.8 L13.6 7.4Z" fill="#77797B"/>
<path d="M15.6 2 L21.6 1.8 L23 3.2 L17.4 4.6 L14.6 4Z" fill="#F4F6F8"/>
<path d="M17.6 5.6 L22.6 4.6 L22 7.4 L18.6 8.4Z" fill="#3E4042"/>
<path d="M13 9.6 L18 9.6 L18.6 14 L14.6 15.4 L11.4 13Z" fill="#3A3C3E"/>
<path d="M13.4 10.6 L16.6 10.4 L16.4 12.6 L13.8 13.2Z" fill="#C8CACC"/>
<path d="M8.4 15.6 L13.6 14 L19.6 14.6 L21 17 L19 19.6 L12.6 21.4 L8.6 19.6Z" fill="#66686A"/>
<path d="M9.6 16 L14 14.8 L18.6 15.4 L13 17.4Z" fill="#F4F6F8"/>
<path d="M9.6 19 L12.8 20.2 L17 19 L13 18.4Z" fill="#D8DADC"/>
</g></svg>
<span class="t s" style="left:624.00px;top:263px;letter-spacing:-0.094px">: 545</span>
<svg style="left:600px;top:285px" width="24" height="18" viewBox="0 0 24 18"><defs><linearGradient id="g132" x1="0" y1="0" x2="1" y2="0"><stop offset="0" stop-color="#C8CCD0"/><stop offset="1" stop-color="#C8CCD0"/></linearGradient><filter id="f134" x="-30%" y="-30%" width="160%" height="160%"><feGaussianBlur stdDeviation="0.45"/></filter><filter id="f135" x="-30%" y="-30%" width="160%" height="160%"><feGaussianBlur stdDeviation="1.1"/></filter></defs>
<g filter="url(#f134)">
<path d="M2 2.6 L8 1.6 L8 3.6 L2 3.4Z" fill="#C0C4C8" opacity=".8"/>
<path d="M7 1 L17 1 L18.4 2.4 L17 3.8 L7 3.8Z" fill="#26282C"/>
<path d="M8 1.6 L12 1.6 L12 2.4 L8 2.4Z" fill="#9A9EA2"/>
<path d="M3 8.4 L12.6 7.6 L12.6 10 L3 10Z" fill="#B4B8BC" opacity=".85"/>
<path d="M12 7 L22 7 L23.6 8.8 L22 10.8 L12 10.8Z" fill="#222428"/>
<path d="M13 7.8 L17 7.8 L17 8.6 L13 8.6Z" fill="#8A8E92"/>
<path d="M1.6 15 L6 14.4 L6 16.6 L1.6 16.4Z" fill="#C8CCD0" opacity=".8"/>
<path d="M5.4 13.6 L12.6 13.6 L14 15.4 L12.6 17.2 L5.4 17.2Z" fill="#3A3C40"/>
<path d="M6 14.4 L11.6 14.4 L11.6 15.6 L6 15.6Z" fill="#ECEFF2"/>
</g></svg>
<span class="t s" style="left:624.00px;top:287px;letter-spacing:-0.266px">: 1054</span>
<div class="gb" style="left:676px;top:252px;width:157px;height:58px"></div>
<div class="a" style="left:682px;top:252px;width:49px;height:1px;background:#ECE9D8"></div>
<span class="t s" style="left:684.00px;top:247px;letter-spacing:-0.030px;color:#0E3CBE">Targeting</span>
<svg style="left:680.6px;top:258.6px" width="23" height="23" viewBox="0 0 23 23"><defs><radialGradient id="g136" cx="0.45" cy="0.45" r="0.55"><stop offset="0" stop-color="#F4FAFA"/><stop offset="0.7" stop-color="#DCE8E8"/><stop offset="1" stop-color="#B8C8C8"/></radialGradient><filter id="f138" x="-30%" y="-30%" width="160%" height="160%"><feGaussianBlur stdDeviation="0.45"/></filter><filter id="f139" x="-30%" y="-30%" width="160%" height="160%"><feGaussianBlur stdDeviation="1.1"/></filter></defs>
<g filter="url(#f138)">
<ellipse cx="11.4" cy="12.8" rx="10.6" ry="9.6" fill="#C0CCCC"/>
<ellipse cx="11" cy="11.8" rx="10" ry="9" fill="url(#g136)"/>
<path d="M2.4 15 Q6 21.6 14 20.4 Q19 19 20.6 14.4" stroke="#fff" stroke-width="1.6" fill="none"/>
<path d="M10.4 12.6 L18.6 2.6 L20 3.6 L12.6 14.4Z" fill="#44544E"/>
<path d="M7 10 Q9 5 14 5.4" stroke="#fff" stroke-width="1.4" fill="none" opacity=".9"/>
</g></svg>
<span class="t s" style="left:709.00px;top:263px;letter-spacing:-0.136px">: 93.75 km</span>
<svg style="left:771px;top:257px" width="25" height="25" viewBox="0 0 25 25"><defs><radialGradient id="g140" cx="0.42" cy="0.4" r="0.62"><stop offset="0" stop-color="#CCC4B8"/><stop offset="0.6" stop-color="#ACA498"/><stop offset="0.85" stop-color="#8A8276"/><stop offset="1" stop-color="#5A5248"/></radialGradient><filter id="f142" x="-30%" y="-30%" width="160%" height="160%"><feGaussianBlur stdDeviation="0.45"/></filter><filter id="f143" x="-30%" y="-30%" width="160%" height="160%"><feGaussianBlur stdDeviation="1.1"/></filter></defs>
<ellipse cx="14.6" cy="15.6" rx="9.6" ry="8.6" fill="#8A826E" opacity=".55" filter="url(#f143)"/>
<g filter="url(#f142)">
<path d="M12.4 .6 L14 4.4 L10.8 4.4Z M12.4 24.4 L14 20.6 L10.8 20.6Z M.4 12.6 L4.2 11 L4.2 14.2Z M24.4 12.6 L20.6 11 L20.6 14.2Z" fill="#8A8070"/>
<circle cx="12.4" cy="12.6" r="9.2" fill="url(#g140)"/>
<circle cx="12.4" cy="12.6" r="5.8" fill="none" stroke="#7A7266" stroke-width=".8"/>
<path d="M12.4 5 L12.4 20.2 M4.8 12.6 L20 12.6" stroke="#6E665A" stroke-width=".9"/>
<path d="M5 8 Q8 3.6 13.6 3.8" stroke="#ECE6DA" stroke-width=".9" fill="none"/>
</g></svg>
<span class="t s" style="left:801.00px;top:263px;letter-spacing:-0.411px">: 5</span>
<svg style="left:682px;top:284.6px" width="21" height="19" viewBox="0 0 21 19"><defs><filter id="f146" x="-30%" y="-30%" width="160%" height="160%"><feGaussianBlur stdDeviation="0.45"/></filter><filter id="f147" x="-30%" y="-30%" width="160%" height="160%"><feGaussianBlur stdDeviation="1.1"/></filter></defs>
<g filter="url(#f146)">
<path d="M8.4 .6 L10.6 8.4 L12.6 3 L14 8 L18.6 6 L20.4 11.6 L19 16.4 L14.6 14 L13 18 L10.4 13.6 L7 17.6 L7.4 12.6 L1.6 14 L5.6 10.4 L.8 8.4 L6.6 8Z" fill="#6E5A44"/>
<path d="M12 9 L18.2 6.8 L19.6 11.6 L18.4 15.2 L13.4 12Z" fill="#E4D8C4"/>
<path d="M14 10 L18 8.4 L18.8 11.6 L17.6 13.4Z" fill="#F8F0E0"/>
<path d="M8.6 2 L10 8.4 L8 8.6Z M1.6 8.6 L6.4 8.8 L6 10Z M2.6 13.6 L7 11.6 L7.6 12.6Z M7.4 16.6 L9.6 13 L10.4 13.8Z" fill="#2E241A"/>
<circle cx="9" cy="10.6" r="1.6" fill="#3A2E22"/>
</g></svg>
<span class="t s" style="left:709.00px;top:287px;letter-spacing:-0.303px">: 343.8 mm</span>
<svg style="left:773.4px;top:283.8px" width="21" height="21" viewBox="0 0 21 21"><defs><filter id="f150" x="-30%" y="-30%" width="160%" height="160%"><feGaussianBlur stdDeviation="0.45"/></filter><filter id="f151" x="-30%" y="-30%" width="160%" height="160%"><feGaussianBlur stdDeviation="1.1"/></filter></defs><g filter="url(#f150)">
<circle cx="10.4" cy="10.2" r="9.4" fill="#E2E2DE" stroke="#8E8E8A" stroke-width="1.1"/>
<circle cx="10.4" cy="10.2" r="7" fill="none" stroke="#F8F8F4" stroke-width="1.6"/>
<circle cx="10.4" cy="10.2" r="5" fill="#D0D0CC" stroke="#6A6A68" stroke-width="1.2"/>
<circle cx="10.4" cy="10.2" r="2.6" fill="#E4E4E0" stroke="#3E3E3C" stroke-width="1.7"/>
<path d="M8.6 8.6 L10.4 7.8" stroke="#fff" stroke-width="1"/>
</g></svg>
<span class="t s" style="left:801.00px;top:287px;letter-spacing:-0.255px">: 29.7</span>
<div class="gb" style="left:593px;top:318px;width:240px;height:35px"></div>
<div class="a" style="left:599px;top:318px;width:39px;height:1px;background:#ECE9D8"></div>
<span class="t s" style="left:601.00px;top:313px;letter-spacing:-0.287px;color:#0E3CBE">Mobility</span>
<svg style="left:600px;top:327px" width="22" height="18" viewBox="0 0 22 18"><defs><radialGradient id="g152" cx="0.4" cy="0.4" r="0.65"><stop offset="0" stop-color="#E4FFFC"/><stop offset="0.5" stop-color="#58D8CC"/><stop offset="1" stop-color="#2AA49C"/></radialGradient><filter id="f154" x="-30%" y="-30%" width="160%" height="160%"><feGaussianBlur stdDeviation="0.45"/></filter><filter id="f155" x="-30%" y="-30%" width="160%" height="160%"><feGaussianBlur stdDeviation="1.1"/></filter></defs>
<g filter="url(#f154)">
<path d="M7.6 7.6 L13 5 L20.6 12.6 L18.6 15.6 L12 17.2 L7 14Z" fill="url(#g152)"/>
<path d="M11 10 L14 8.4 L17.6 12.4 L13 14.4Z" fill="#C4FCF4"/>
<path d="M.8 5.6 L3.4 1.8 L8.6 .8 L12.6 4.6 L9.4 10 L6.4 13.6 L2.6 11Z" fill="#B4703C"/>
<path d="M2 5.4 L4 2.6 L8.4 2 L11.2 4.8 L8.4 9 L4 8.4Z" fill="#FCF8F0"/>
<path d="M2.6 11 L6.4 13.6 L7.4 15.4 L5 16 L2 13.4Z" fill="#7A7468"/>
<path d="M4 8.6 L8.2 9.2 L6.4 12.4 L3.4 10.6Z" fill="#D8CCB8"/>
</g></svg>
<span class="t s" style="left:626.00px;top:329px;letter-spacing:-0.139px">: 786 m/s</span>
<svg style="left:682px;top:322px" width="28" height="26" viewBox="0 0 28 26"><defs><radialGradient id="g156" cx="0.42" cy="0.38" r="0.6"><stop offset="0" stop-color="#D4E8FC"/><stop offset="0.5" stop-color="#6CA4DC"/><stop offset="1" stop-color="#3A6CAC"/></radialGradient><filter id="f158" x="-30%" y="-30%" width="160%" height="160%"><feGaussianBlur stdDeviation="0.45"/></filter><filter id="f159" x="-30%" y="-30%" width="160%" height="160%"><feGaussianBlur stdDeviation="1.1"/></filter></defs>
<g filter="url(#f158)">
<path d="M11.6 .8 L13.6 .8 L13.6 3.4 L15.6 4 L15.6 5.4 L9.6 5.4 L9.6 4 L11.6 3.4Z" fill="#4A5868"/>
<path d="M5.6 7 L7.6 5.4 L8.6 6.6Z M19.6 7 L17.6 5.4 L16.6 6.6Z" fill="#4A5868"/>
<circle cx="12.6" cy="12" r="7.4" fill="#4A6484"/>
<circle cx="12.6" cy="12" r="5.6" fill="url(#g156)"/>
<path d="M12.6 8 L12.6 12.6" stroke="#1E3A6A" stroke-width="1.3"/>
<path d="M6.4 17 L1 25 L4 25 L8.4 18.6Z M10 19.4 L7.4 25 L10.4 25 L12 19.8Z M14 19.8 L14.4 25 L17.4 25 L16 19.4Z M17.6 18.6 L21 24.6 L24 23.6 L19.6 17Z" fill="#4E88C8" opacity=".85"/>
<path d="M20.6 17.4 L27 19.6 L24.6 23.6 L22 21Z" fill="#6CA0D8" opacity=".85"/>
</g></svg>
<span class="t s" style="left:712.00px;top:329px;letter-spacing:-0.281px">: 8.6 s</span>
<svg style="left:752px;top:324px" width="20" height="23" viewBox="0 0 20 23"><defs><filter id="f162" x="-30%" y="-30%" width="160%" height="160%"><feGaussianBlur stdDeviation="0.45"/></filter><filter id="f163" x="-30%" y="-30%" width="160%" height="160%"><feGaussianBlur stdDeviation="1.1"/></filter></defs>
<g filter="url(#f162)">
<path d="M1.6 8.4 L6 2.4 L11 .8 L15.6 3 L18.4 9 L19.2 16 L15.6 21 L9.6 21.8 L4.4 18 L1.4 13Z" fill="#5E4E44"/>
<path d="M2.4 8.4 L6.4 3 L11 1.6 L14.6 3.4 L9 8 L5 13.4 L2.4 12.4Z" fill="#5CD4CC"/>
<path d="M4 8.6 L7.6 4.6 L10 5.4 L6.4 10Z" fill="#DCFAF8"/>
<path d="M5 13.4 L9 8 L14.6 3.4 L17.4 8.6 L13 10 L8.4 15.6Z" fill="#E8E0DC"/>
<path d="M8.4 15.6 L13 10 L17.4 8.6 L18.2 15.6 L15 20 L10.6 20.4Z" fill="#C8B4AC"/>
<path d="M11 14 L14.4 11.6 L16.6 14.6 L14.6 18.4 L11.6 18.4Z" fill="#6E3E30"/>
<path d="M12.4 14.4 L14 13.4 L15 15 L14 17 L12.6 16.8Z" fill="#E8D4C8"/>
<path d="M2.4 12.4 L5 13.4 L8.4 15.6 L10.6 20.4 L4.4 18Z" fill="#2E2620"/>
</g></svg>
<span class="t s" style="left:775.00px;top:329px;letter-spacing:-0.010px">: 3 au/s</span>
<span class="t s" style="left:592.50px;top:362px;letter-spacing:-0.226px">Signature: 97.5 m</span>
<span class="t s" style="left:701.00px;top:362px;letter-spacing:-0.130px">Price: 623,901,136 isk</span>
<span class="t s" style="left:592.50px;top:378px;letter-spacing:-0.268px">Cargohold: 300 m3</span>
<span class="t s" style="left:592.50px;top:394px;letter-spacing:-0.240px">Fleet Commander - right click to set</span>
<span class="t s" style="left:592.50px;top:410px;letter-spacing:-0.206px">Wing Commander - right click to set</span>
<span class="t s" style="left:592.50px;top:426px;letter-spacing:-0.221px">Squad Commander - right click to set</span>
</body></html>
